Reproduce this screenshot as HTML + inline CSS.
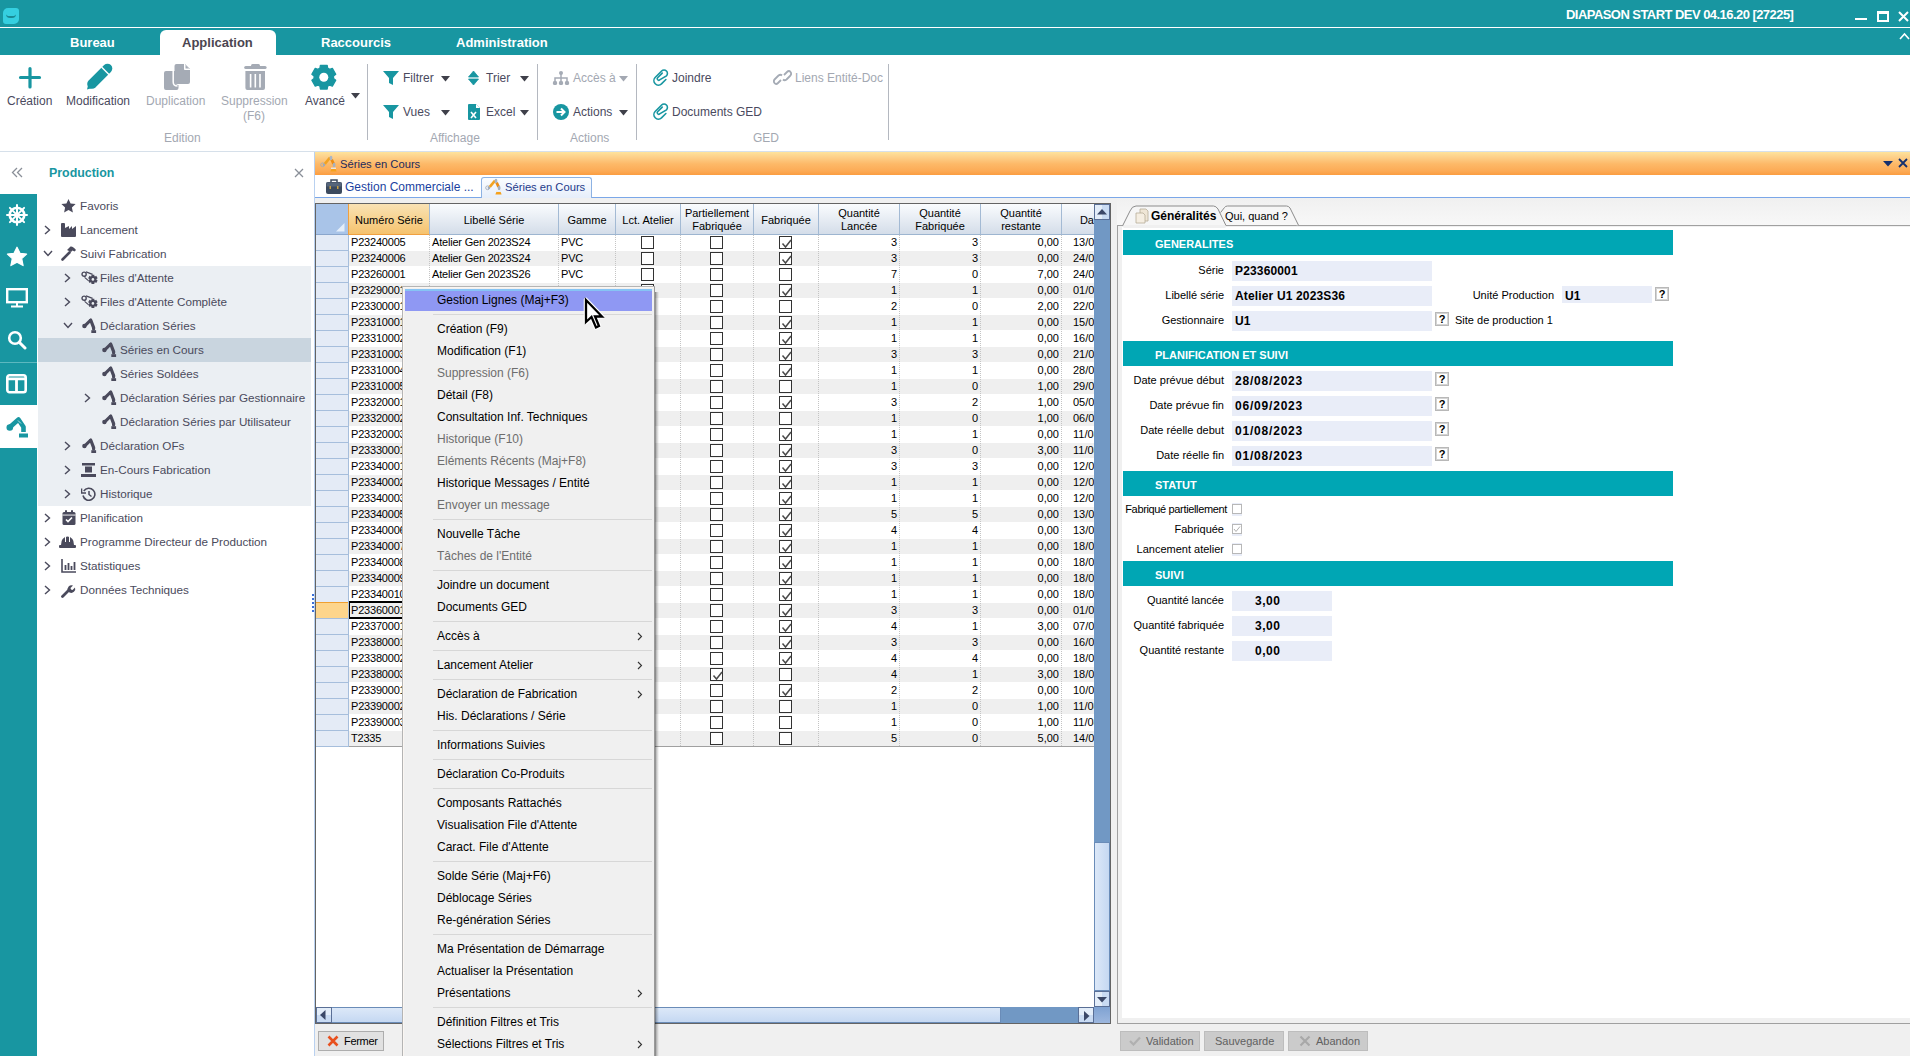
<!DOCTYPE html><html><head><meta charset="utf-8"><style>
*{box-sizing:border-box;margin:0;padding:0}
html,body{width:1910px;height:1056px;overflow:hidden;background:#fff;font-family:"Liberation Sans",sans-serif;}
.ab{position:absolute;white-space:nowrap}
.t{position:absolute;white-space:nowrap;line-height:16px}
</style></head><body>
<div class="ab" style="left:0;top:0;width:1910px;height:27px;background:#1896a1"></div>
<div class="ab" style="left:0;top:27px;width:1910px;height:1px;background:#fff"></div>
<div class="ab" style="left:0;top:28px;width:1910px;height:27px;background:#1896a1"></div>
<div class="ab" style="left:3px;top:8px;width:16px;height:16px;background:#35cfe0;border-radius:5px 3px 5px 3px"></div>
<div class="ab" style="left:6px;top:14px;width:10px;height:4px;border-bottom:2px solid #1a8a95;border-radius:0 0 6px 6px"></div>
<div class="t" style="left:1566px;top:7px;font-size:13px;letter-spacing:-0.55px;font-weight:bold;color:#fff">DIAPASON START DEV 04.16.20 [27225]</div>
<div class="ab" style="left:1855px;top:18px;width:12px;height:2px;background:#fff"></div>
<div class="ab" style="left:1877px;top:11px;width:12px;height:11px;border:2px solid #fff;border-top-width:3px"></div>
<svg class="ab" style="left:1898px;top:11px" width="11" height="11"><path d="M1 1L10 10M10 1L1 10" stroke="#fff" stroke-width="2"/></svg>
<svg class="ab" style="left:1899px;top:32px" width="11" height="8"><path d="M1 7L5.5 2L10 7" stroke="#fff" stroke-width="1.6" fill="none"/></svg>
<div class="ab" style="left:160px;top:30px;width:116px;height:25px;background:#fff;border-radius:6px 6px 0 0"></div>
<div class="t" style="left:70px;top:35px;font-size:13px;font-weight:bold;color:#fff">Bureau</div>
<div class="t" style="left:182px;top:35px;font-size:13px;font-weight:bold;color:#4b4550">Application</div>
<div class="t" style="left:321px;top:35px;font-size:13px;font-weight:bold;color:#fff">Raccourcis</div>
<div class="t" style="left:456px;top:35px;font-size:13px;font-weight:bold;color:#fff">Administration</div>
<div class="ab" style="left:0;top:151px;width:1910px;height:1px;background:#d6e0ea"></div>
<div class="ab" style="left:367px;top:64px;width:1px;height:76px;background:#b4b8c0"></div>
<div class="ab" style="left:537px;top:64px;width:1px;height:76px;background:#b4b8c0"></div>
<div class="ab" style="left:636px;top:64px;width:1px;height:76px;background:#b4b8c0"></div>
<div class="ab" style="left:888px;top:64px;width:1px;height:76px;background:#b4b8c0"></div>
<div class="t" style="left:7px;top:93px;font-size:12px;color:#4a4a5e">Création</div>
<div class="t" style="left:66px;top:93px;font-size:12px;color:#4a4a5e">Modification</div>
<div class="t" style="left:146px;top:93px;font-size:12px;color:#a3a8b2">Duplication</div>
<div class="t" style="left:221px;top:93px;font-size:12px;color:#a3a8b2">Suppression</div>
<div class="t" style="left:243px;top:108px;font-size:12px;color:#a3a8b2">(F6)</div>
<div class="t" style="left:305px;top:93px;font-size:12px;color:#4a4a5e">Avancé</div>
<div class="t" style="left:164px;top:130px;font-size:12px;color:#a3a8b2">Edition</div>
<div class="t" style="left:430px;top:130px;font-size:12px;color:#a3a8b2">Affichage</div>
<div class="t" style="left:570px;top:130px;font-size:12px;color:#a3a8b2">Actions</div>
<div class="t" style="left:753px;top:130px;font-size:12px;color:#a3a8b2">GED</div>
<div class="t" style="left:403px;top:70px;font-size:12px;color:#4a4a5e">Filtrer</div>
<div class="t" style="left:486px;top:70px;font-size:12px;color:#4a4a5e">Trier</div>
<div class="t" style="left:573px;top:70px;font-size:12px;color:#a3a8b2">Accès à</div>
<div class="t" style="left:672px;top:70px;font-size:12px;color:#4a4a5e">Joindre</div>
<div class="t" style="left:795px;top:70px;font-size:12px;color:#a3a8b2">Liens Entité-Doc</div>
<div class="t" style="left:403px;top:104px;font-size:12px;color:#4a4a5e">Vues</div>
<div class="t" style="left:486px;top:104px;font-size:12px;color:#4a4a5e">Excel</div>
<div class="t" style="left:573px;top:104px;font-size:12px;color:#4a4a5e">Actions</div>
<div class="t" style="left:672px;top:104px;font-size:12px;color:#4a4a5e">Documents GED</div>
<svg class="ab" style="left:351px;top:93px" width="9" height="6"><path d="M0 0H9L4.5 5.5Z" fill="#3f404a"/></svg>
<svg class="ab" style="left:441px;top:76px" width="9" height="6"><path d="M0 0H9L4.5 5.5Z" fill="#3f404a"/></svg>
<svg class="ab" style="left:520px;top:76px" width="9" height="6"><path d="M0 0H9L4.5 5.5Z" fill="#3f404a"/></svg>
<svg class="ab" style="left:619px;top:76px" width="9" height="6"><path d="M0 0H9L4.5 5.5Z" fill="#a3a8b2"/></svg>
<svg class="ab" style="left:441px;top:110px" width="9" height="6"><path d="M0 0H9L4.5 5.5Z" fill="#3f404a"/></svg>
<svg class="ab" style="left:520px;top:110px" width="9" height="6"><path d="M0 0H9L4.5 5.5Z" fill="#3f404a"/></svg>
<svg class="ab" style="left:619px;top:110px" width="9" height="6"><path d="M0 0H9L4.5 5.5Z" fill="#3f404a"/></svg>
<svg class="ab" style="left:17px;top:65px" width="26" height="26"><path d="M13 3.5V22M3.5 12.5H22.5" stroke="#1896a1" stroke-width="3.2" stroke-linecap="round"/></svg>
<svg class="ab" style="left:85px;top:62px" width="29" height="29"><path d="M2 27.5L4.3 18.5L10.8 25Z" fill="#1896a1"/><path d="M7 22L22.5 6.5" stroke="#1896a1" stroke-width="9.6" stroke-linecap="round"/><path d="M16.5 5L24.2 12.7" stroke="#fff" stroke-width="1.4"/></svg>
<svg class="ab" style="left:162px;top:62px" width="30" height="30"><path d="M12.5 4Q12.5 2 14.5 2H23L28 7V20Q28 22 26 22H14.5Q12.5 22 12.5 20Z" fill="#a5abb5"/><path d="M22.5 2V7.5H28" fill="#fff" stroke="#fff" stroke-width="1"/><path d="M23.5 3L27 6.5H23.5Z" fill="#a5abb5"/><path d="M2 11Q2 9 4 9H13.5V20Q13.5 23 16.5 23H16.5V26Q16.5 28 14.5 28H4Q2 28 2 26Z" fill="#a5abb5"/><path d="M11.2 8.5V20Q11.2 24 15.5 24" stroke="#fff" stroke-width="1.5" fill="none"/></svg>
<svg class="ab" style="left:244px;top:63px" width="23" height="28"><rect x="0.2" y="3" width="22.4" height="3" rx="1.5" fill="#a5abb5"/><rect x="7" y="1" width="9" height="3" rx="1.5" fill="#a5abb5"/><path d="M1.4 8H21V25Q21 27 19 27H3.4Q1.4 27 1.4 25Z" fill="#a5abb5"/><path d="M6.6 11V24.5M11.3 11V24.5M16 11V24.5" stroke="#fff" stroke-width="1.6"/></svg>
<svg class="ab" style="left:311px;top:64px" width="26" height="27"><path d="M8.98 4.17 L9.40 1.38 L16.20 1.38 L16.62 4.17 L18.71 5.38 L21.34 4.35 L24.74 10.23 L22.53 11.99 L22.53 14.41 L24.74 16.17 L21.34 22.05 L18.71 21.02 L16.62 22.23 L16.20 25.02 L9.40 25.02 L8.98 22.23 L6.89 21.02 L4.26 22.05 L0.86 16.17 L3.07 14.41 L3.07 11.99 L0.86 10.23 L4.26 4.35 L6.89 5.38Z" fill="#1896a1" stroke="#1896a1" stroke-width="1.3" stroke-linejoin="round"/><circle cx="12.8" cy="13.2" r="4.5" fill="#fff"/></svg>
<svg class="ab" style="left:383px;top:71px" width="16" height="15"><path d="M0 0H16L10 7V14L6 12V7Z" fill="#1896a1"/></svg>
<svg class="ab" style="left:383px;top:105px" width="16" height="15"><path d="M0 0H16L10 7V14L6 12V7Z" fill="#1896a1"/></svg>
<svg class="ab" style="left:468px;top:70px" width="11" height="16"><path d="M5.5 1L10.5 7H0.5Z M5.5 15L10.5 9H0.5Z" fill="#1896a1" stroke="#1896a1" stroke-width="0.8" stroke-linejoin="round"/></svg>
<svg class="ab" style="left:468px;top:104px" width="12" height="16"><path d="M0 1Q0 0 1 0H8L12 4V15Q12 16 11 16H1Q0 16 0 15Z" fill="#1896a1"/><path d="M8 0V4H12" fill="#fff"/><path d="M3 8L8 14M8 8L3 14" stroke="#fff" stroke-width="1.6"/></svg>
<svg class="ab" style="left:552px;top:71px" width="18" height="14"><circle cx="9" cy="2" r="2" fill="#a5abb5"/><path d="M9 3V7M3 11V7H15V11M9 7V11" stroke="#a5abb5" stroke-width="1.5" fill="none"/><circle cx="3" cy="12" r="2.2" fill="#a5abb5"/><circle cx="9" cy="12" r="2.2" fill="#a5abb5"/><circle cx="15" cy="12" r="2.2" fill="#a5abb5"/></svg>
<svg class="ab" style="left:553px;top:104px" width="16" height="16"><circle cx="8" cy="8" r="8" fill="#1896a1"/><path d="M3.5 8H11M8 4.5L11.5 8L8 11.5" stroke="#fff" stroke-width="2" fill="none"/></svg>
<svg class="ab" style="left:650px;top:67px" width="21" height="22"><path d="M15.87 12.50 L11.48 16.88 A4.5 4.5 0 0 1 5.12 10.52 L11.62 4.01 A3.4 3.4 0 0 1 16.43 8.82 L9.68 12.82 A1.45 1.45 0 0 1 7.63 10.77 L12.22 6.17" stroke="#1896a1" stroke-width="1.6" fill="none" stroke-linecap="round"/></svg>
<svg class="ab" style="left:650px;top:101px" width="21" height="22"><path d="M15.87 12.50 L11.48 16.88 A4.5 4.5 0 0 1 5.12 10.52 L11.62 4.01 A3.4 3.4 0 0 1 16.43 8.82 L9.68 12.82 A1.45 1.45 0 0 1 7.63 10.77 L12.22 6.17" stroke="#1896a1" stroke-width="1.6" fill="none" stroke-linecap="round"/></svg>
<svg class="ab" style="left:773px;top:70px" width="19" height="15"><path d="M8 10L5 13Q3 15 1.5 13Q0 11 2 9L5.5 5.5Q7.5 4 9 5.5M11 5L14 2Q16 0 17.5 2Q19 4 17 6L13.5 9.5Q11.5 11 10 9.5" stroke="#a5abb5" stroke-width="1.8" fill="none"/></svg>
<div class="ab" style="left:0;top:194px;width:37px;height:862px;background:#1896a1"></div>
<div class="ab" style="left:0;top:405px;width:37px;height:43px;background:#fff"></div>
<div class="ab" style="left:0;top:362px;width:37px;height:1px;background:#5cb8bf"></div>
<svg class="ab" style="left:11px;top:167px" width="12" height="11"><path d="M6 1L1.5 5.5L6 10M11 1L6.5 5.5L11 10" stroke="#8a8f98" stroke-width="1.3" fill="none"/></svg>
<div class="t" style="left:49px;top:165px;font-size:12.4px;font-weight:bold;color:#1896a1">Production</div>
<svg class="ab" style="left:294px;top:168px" width="10" height="10"><path d="M1 1L9 9M9 1L1 9" stroke="#8a8f98" stroke-width="1.3"/></svg>
<svg class="ab" style="left:6px;top:204px" width="22" height="22" viewBox="0 0 22 22"><circle cx="11" cy="11" r="7.3" stroke="#fff" stroke-width="2.6" fill="none"/><circle cx="11" cy="11" r="1.8" fill="#fff"/><path d="M11 1V21M1 11H21M3.9 3.9L18.1 18.1M18.1 3.9L3.9 18.1" stroke="#fff" stroke-width="2" stroke-linecap="round"/></svg>
<svg class="ab" style="left:6px;top:246px" width="22" height="21" viewBox="0 0 22 21"><path d="M11 1.2L14 7.3L20.6 8.1L15.7 12.6L17.1 19.6L11 16.2L4.9 19.6L6.3 12.6L1.4 8.1L8 7.3Z" fill="#fff" stroke="#fff" stroke-width="1.2" stroke-linejoin="round"/></svg>
<svg class="ab" style="left:6px;top:288px" width="22" height="20"><rect x="1.2" y="1.2" width="19.6" height="13" stroke="#fff" stroke-width="2.4" fill="none"/><path d="M11 14.5V18M5 18.5H17" stroke="#fff" stroke-width="2"/></svg>
<svg class="ab" style="left:7px;top:330px" width="20" height="20"><circle cx="8" cy="8" r="5.8" stroke="#fff" stroke-width="2.6" fill="none"/><path d="M12.5 12.5L18 18" stroke="#fff" stroke-width="3" stroke-linecap="round"/></svg>
<svg class="ab" style="left:6px;top:374px" width="21" height="20"><rect x="1.3" y="1.3" width="18.4" height="17" rx="2.2" stroke="#fff" stroke-width="2.6" fill="none"/><path d="M1 4.8H20M10.5 5V18" stroke="#fff" stroke-width="2.8"/></svg>
<svg class="ab" style="left:5px;top:414px" width="24" height="25"><circle cx="4.8" cy="13.5" r="3.3" fill="#1896a1"/><path d="M5 13L13.5 5.5L18.5 13V18" stroke="#1896a1" stroke-width="4.6" fill="none" stroke-linejoin="round"/><rect x="14" y="19.5" width="9" height="4" fill="#1896a1"/><path d="M13 6.5L16 9.5" stroke="#fff" stroke-width="0.7"/></svg>
<div class="ab" style="left:38px;top:266px;width:273px;height:240px;background:#ebeff3"></div>
<div class="ab" style="left:38px;top:338px;width:273px;height:24px;background:#c9d5df"></div>
<svg class="ab" style="left:61px;top:199px" width="15" height="14"><path d="M7.5 0L9.6 4.6L14.6 5.1L10.9 8.5L11.9 13.5L7.5 11L3.1 13.5L4.1 8.5L0.4 5.1L5.4 4.6Z" fill="#4a4a5c"/></svg>
<div class="t" style="left:80px;top:198px;font-size:11.7px;color:#4a4a5c">Favoris</div>
<svg class="ab" style="left:44px;top:225px" width="7" height="10"><path d="M1 1L5.5 5L1 9" stroke="#4a4a5c" stroke-width="1.4" fill="none"/></svg>
<svg class="ab" style="left:61px;top:223px" width="15" height="14"><path d="M0 1Q0 0 1 0H3Q4 0 4 1V5L8 3V6L11 3V6L15 3V13Q15 14 14 14H1Q0 14 0 13Z" fill="#4a4a5c"/></svg>
<div class="t" style="left:80px;top:222px;font-size:11.7px;color:#4a4a5c">Lancement</div>
<svg class="ab" style="left:43px;top:250px" width="10" height="7"><path d="M1 1L5 5.5L9 1" stroke="#4a4a5c" stroke-width="1.4" fill="none"/></svg>
<svg class="ab" style="left:61px;top:246px" width="16" height="15"><path d="M1.5 13.5L8.5 6.5" stroke="#4a4a5c" stroke-width="2.6" stroke-linecap="round"/><path d="M6 4L9.5 0.5Q12 0 15 4L13.5 5.5L11.5 4.5L10 6Z" fill="#4a4a5c"/></svg>
<div class="t" style="left:80px;top:246px;font-size:11.7px;color:#4a4a5c">Suivi Fabrication</div>
<svg class="ab" style="left:64px;top:273px" width="7" height="10"><path d="M1 1L5.5 5L1 9" stroke="#4a4a5c" stroke-width="1.4" fill="none"/></svg>
<svg class="ab" style="left:81px;top:271px" width="17" height="15"><circle cx="3.1" cy="3.2" r="2.1" stroke="#4a4a5c" stroke-width="1.4" fill="none"/><path d="M5 0.9L11.6 3.4M3.6 6.4L7.4 9.6" stroke="#4a4a5c" stroke-width="1.2"/><path d="M10.43 5.11 L10.45 3.72 L13.35 3.72 L13.37 5.11 L14.01 5.49 L15.23 4.81 L16.68 7.31 L15.48 8.03 L15.48 8.77 L16.68 9.49 L15.23 11.99 L14.01 11.31 L13.37 11.69 L13.35 13.08 L10.45 13.08 L10.43 11.69 L9.79 11.31 L8.57 11.99 L7.12 9.49 L8.32 8.77 L8.32 8.03 L7.12 7.31 L8.57 4.81 L9.79 5.49Z" fill="#4a4a5c"/><circle cx="11.9" cy="8.4" r="1.3" fill="#ebeff3"/></svg>
<div class="t" style="left:100px;top:270px;font-size:11.7px;color:#4a4a5c">Files d'Attente</div>
<svg class="ab" style="left:64px;top:297px" width="7" height="10"><path d="M1 1L5.5 5L1 9" stroke="#4a4a5c" stroke-width="1.4" fill="none"/></svg>
<svg class="ab" style="left:81px;top:295px" width="17" height="15"><circle cx="3.1" cy="3.2" r="2.1" stroke="#4a4a5c" stroke-width="1.4" fill="none"/><path d="M5 0.9L11.6 3.4M3.6 6.4L7.4 9.6" stroke="#4a4a5c" stroke-width="1.2"/><path d="M10.43 5.11 L10.45 3.72 L13.35 3.72 L13.37 5.11 L14.01 5.49 L15.23 4.81 L16.68 7.31 L15.48 8.03 L15.48 8.77 L16.68 9.49 L15.23 11.99 L14.01 11.31 L13.37 11.69 L13.35 13.08 L10.45 13.08 L10.43 11.69 L9.79 11.31 L8.57 11.99 L7.12 9.49 L8.32 8.77 L8.32 8.03 L7.12 7.31 L8.57 4.81 L9.79 5.49Z" fill="#4a4a5c"/><circle cx="11.9" cy="8.4" r="1.3" fill="#ebeff3"/></svg>
<div class="t" style="left:100px;top:294px;font-size:11.7px;color:#4a4a5c">Files d'Attente Complète</div>
<svg class="ab" style="left:63px;top:322px" width="10" height="7"><path d="M1 1L5 5.5L9 1" stroke="#4a4a5c" stroke-width="1.4" fill="none"/></svg>
<svg class="ab" style="left:81px;top:318px" width="17" height="16"><circle cx="3.4" cy="8" r="2.2" fill="#4a4a5c"/><path d="M3.8 7.8L9.6 2.2" stroke="#4a4a5c" stroke-width="3" stroke-linecap="round"/><path d="M9.8 2.2L12.6 9.6V11" stroke="#4a4a5c" stroke-width="3.2" stroke-linecap="round"/><rect x="10.3" y="12.2" width="4.8" height="2.8" fill="#4a4a5c"/></svg>
<div class="t" style="left:100px;top:318px;font-size:11.7px;color:#4a4a5c">Déclaration Séries</div>
<svg class="ab" style="left:101px;top:342px" width="17" height="16"><circle cx="3.4" cy="8" r="2.2" fill="#4a4a5c"/><path d="M3.8 7.8L9.6 2.2" stroke="#4a4a5c" stroke-width="3" stroke-linecap="round"/><path d="M9.8 2.2L12.6 9.6V11" stroke="#4a4a5c" stroke-width="3.2" stroke-linecap="round"/><rect x="10.3" y="12.2" width="4.8" height="2.8" fill="#4a4a5c"/></svg>
<div class="t" style="left:120px;top:342px;font-size:11.7px;color:#4a4a5c">Séries en Cours</div>
<svg class="ab" style="left:101px;top:366px" width="17" height="16"><circle cx="3.4" cy="8" r="2.2" fill="#4a4a5c"/><path d="M3.8 7.8L9.6 2.2" stroke="#4a4a5c" stroke-width="3" stroke-linecap="round"/><path d="M9.8 2.2L12.6 9.6V11" stroke="#4a4a5c" stroke-width="3.2" stroke-linecap="round"/><rect x="10.3" y="12.2" width="4.8" height="2.8" fill="#4a4a5c"/></svg>
<div class="t" style="left:120px;top:366px;font-size:11.7px;color:#4a4a5c">Séries Soldées</div>
<svg class="ab" style="left:84px;top:393px" width="7" height="10"><path d="M1 1L5.5 5L1 9" stroke="#4a4a5c" stroke-width="1.4" fill="none"/></svg>
<svg class="ab" style="left:101px;top:390px" width="17" height="16"><circle cx="3.4" cy="8" r="2.2" fill="#4a4a5c"/><path d="M3.8 7.8L9.6 2.2" stroke="#4a4a5c" stroke-width="3" stroke-linecap="round"/><path d="M9.8 2.2L12.6 9.6V11" stroke="#4a4a5c" stroke-width="3.2" stroke-linecap="round"/><rect x="10.3" y="12.2" width="4.8" height="2.8" fill="#4a4a5c"/></svg>
<div class="t" style="left:120px;top:390px;font-size:11.7px;color:#4a4a5c">Déclaration Séries par Gestionnaire</div>
<svg class="ab" style="left:101px;top:414px" width="17" height="16"><circle cx="3.4" cy="8" r="2.2" fill="#4a4a5c"/><path d="M3.8 7.8L9.6 2.2" stroke="#4a4a5c" stroke-width="3" stroke-linecap="round"/><path d="M9.8 2.2L12.6 9.6V11" stroke="#4a4a5c" stroke-width="3.2" stroke-linecap="round"/><rect x="10.3" y="12.2" width="4.8" height="2.8" fill="#4a4a5c"/></svg>
<div class="t" style="left:120px;top:414px;font-size:11.7px;color:#4a4a5c">Déclaration Séries par Utilisateur</div>
<svg class="ab" style="left:64px;top:441px" width="7" height="10"><path d="M1 1L5.5 5L1 9" stroke="#4a4a5c" stroke-width="1.4" fill="none"/></svg>
<svg class="ab" style="left:81px;top:438px" width="17" height="16"><circle cx="3.4" cy="8" r="2.2" fill="#4a4a5c"/><path d="M3.8 7.8L9.6 2.2" stroke="#4a4a5c" stroke-width="3" stroke-linecap="round"/><path d="M9.8 2.2L12.6 9.6V11" stroke="#4a4a5c" stroke-width="3.2" stroke-linecap="round"/><rect x="10.3" y="12.2" width="4.8" height="2.8" fill="#4a4a5c"/></svg>
<div class="t" style="left:100px;top:438px;font-size:11.7px;color:#4a4a5c">Déclaration OFs</div>
<svg class="ab" style="left:64px;top:465px" width="7" height="10"><path d="M1 1L5.5 5L1 9" stroke="#4a4a5c" stroke-width="1.4" fill="none"/></svg>
<svg class="ab" style="left:81px;top:463px" width="15" height="14"><rect x="1" y="0" width="13" height="2.5" fill="#4a4a5c"/><rect x="4" y="3.5" width="7" height="6" fill="#4a4a5c"/><rect x="0" y="11" width="15" height="3" fill="#4a4a5c"/></svg>
<div class="t" style="left:100px;top:462px;font-size:11.7px;color:#4a4a5c">En-Cours Fabrication</div>
<svg class="ab" style="left:64px;top:489px" width="7" height="10"><path d="M1 1L5.5 5L1 9" stroke="#4a4a5c" stroke-width="1.4" fill="none"/></svg>
<svg class="ab" style="left:81px;top:487px" width="15" height="14"><path d="M2.8 4A6 6 0 1 1 2 8.5" stroke="#4a4a5c" stroke-width="1.6" fill="none"/><path d="M0.5 1.5V6H5" stroke="#4a4a5c" stroke-width="1.6" fill="none"/><path d="M8 4V7.5L10.5 9.5" stroke="#4a4a5c" stroke-width="1.5" fill="none"/></svg>
<div class="t" style="left:100px;top:486px;font-size:11.7px;color:#4a4a5c">Historique</div>
<svg class="ab" style="left:44px;top:513px" width="7" height="10"><path d="M1 1L5.5 5L1 9" stroke="#4a4a5c" stroke-width="1.4" fill="none"/></svg>
<svg class="ab" style="left:62px;top:510px" width="14" height="15"><rect x="0.5" y="2" width="13" height="13" rx="1.5" fill="#4a4a5c"/><rect x="3" y="0" width="2" height="3" rx="1" fill="#4a4a5c"/><rect x="9" y="0" width="2" height="3" rx="1" fill="#4a4a5c"/><rect x="0.5" y="4.6" width="13" height="0.9" fill="#fff"/><path d="M4 9.5L6 11.5L10 7.5" stroke="#fff" stroke-width="1.7" fill="none"/></svg>
<div class="t" style="left:80px;top:510px;font-size:11.7px;color:#4a4a5c">Planification</div>
<svg class="ab" style="left:44px;top:537px" width="7" height="10"><path d="M1 1L5.5 5L1 9" stroke="#4a4a5c" stroke-width="1.4" fill="none"/></svg>
<svg class="ab" style="left:59px;top:535px" width="17" height="13"><path d="M2 10Q2 2 8.5 1.5Q15 2 15 10Z" fill="#4a4a5c"/><rect x="0" y="10" width="17" height="3" rx="1" fill="#4a4a5c"/><path d="M6.5 2V7M10.5 2V7" stroke="#fff" stroke-width="1"/></svg>
<div class="t" style="left:80px;top:534px;font-size:11.7px;color:#4a4a5c">Programme Directeur de Production</div>
<svg class="ab" style="left:44px;top:561px" width="7" height="10"><path d="M1 1L5.5 5L1 9" stroke="#4a4a5c" stroke-width="1.4" fill="none"/></svg>
<svg class="ab" style="left:61px;top:559px" width="15" height="14"><path d="M1 0V13H15" stroke="#4a4a5c" stroke-width="1.6" fill="none"/><path d="M4.5 11V6M7.5 11V4M10.5 11V7M13.5 11V3" stroke="#4a4a5c" stroke-width="1.8"/></svg>
<div class="t" style="left:80px;top:558px;font-size:11.7px;color:#4a4a5c">Statistiques</div>
<svg class="ab" style="left:44px;top:585px" width="7" height="10"><path d="M1 1L5.5 5L1 9" stroke="#4a4a5c" stroke-width="1.4" fill="none"/></svg>
<svg class="ab" style="left:61px;top:583px" width="15" height="15"><path d="M1.5 13.5L8 7" stroke="#4a4a5c" stroke-width="2.8" stroke-linecap="round"/><path d="M7 8A4 4 0 0 1 12 2.5L9.5 5L10 6.5L11.5 7L14 4.5A4 4 0 0 1 8.5 9.5Z" fill="#4a4a5c"/></svg>
<div class="t" style="left:80px;top:582px;font-size:11.7px;color:#4a4a5c">Données Techniques</div>
<div class="ab" style="left:314px;top:152px;width:1px;height:904px;background:#b9d1f0"></div>
<div class="ab" style="left:315px;top:152px;width:1595px;height:23px;background:linear-gradient(#fee39c 0%,#fdd08a 22%,#fdb968 52%,#fcab56 82%,#fb9d40 100%)"></div>
<div class="t" style="left:340px;top:156px;font-size:11.2px;color:#1e2a5c">Séries en Cours</div>
<svg class="ab" style="left:1883px;top:161px" width="10" height="6"><path d="M0 0H10L5 5.5Z" fill="#15306e"/></svg>
<svg class="ab" style="left:1898px;top:158px" width="10" height="10"><path d="M1 1L9 9M9 1L1 9" stroke="#15306e" stroke-width="1.8"/></svg>
<svg class="ab" style="left:318px;top:152px" width="24" height="24" viewBox="0 0 24 24"><circle cx="4.6" cy="12.8" r="1.9" stroke="#a3acb8" stroke-width="0.9" fill="none"/><circle cx="6" cy="12.8" r="1.3" fill="#9eaaba"/><path d="M6.8 11.8L12 5.6" stroke="#f2a322" stroke-width="2.6"/><path d="M13.6 7.5L15.6 11.8" stroke="#ec8d14" stroke-width="2.8"/><ellipse cx="13" cy="6" rx="1.4" ry="2.2" fill="#aab5c4"/><ellipse cx="16.1" cy="13" rx="1.4" ry="2.2" fill="#a4b0c0"/><rect x="13" y="15.6" width="5" height="1.3" fill="#e6ecf2"/><path d="M12.4 19.6L13.3 16.9H17.7L18.6 19.6Z" fill="#f5a11c"/></svg>
<div class="ab" style="left:315px;top:197px;width:1595px;height:1px;background:#7ba7e8"></div>
<svg class="ab" style="left:326px;top:179px" width="16" height="15"><rect x="0" y="3" width="16" height="12" rx="2" fill="#3c4a5e"/><path d="M5 3V1H11V3" stroke="#3c4a5e" stroke-width="1.5" fill="none"/><rect x="0.5" y="3.5" width="15" height="4" fill="#56657a"/><rect x="3.5" y="7" width="1.5" height="3" fill="#c9a040"/><rect x="11" y="7" width="1.5" height="3" fill="#c9a040"/></svg>
<div class="t" style="left:345px;top:179px;font-size:12px;color:#1a3fa0">Gestion Commerciale ...</div>
<div class="ab" style="left:481px;top:177px;width:111px;height:21px;border:1px solid #8db2e3;border-bottom:none;border-radius:3px 3px 0 0;background:linear-gradient(#fbfdff,#e6eefa)"></div>
<svg class="ab" style="left:483px;top:175px" width="24" height="24" viewBox="0 0 24 24"><circle cx="4.6" cy="12.8" r="1.9" stroke="#a3acb8" stroke-width="0.9" fill="none"/><circle cx="6" cy="12.8" r="1.3" fill="#9eaaba"/><path d="M6.8 11.8L12 5.6" stroke="#f2a322" stroke-width="2.6"/><path d="M13.6 7.5L15.6 11.8" stroke="#ec8d14" stroke-width="2.8"/><ellipse cx="13" cy="6" rx="1.4" ry="2.2" fill="#aab5c4"/><ellipse cx="16.1" cy="13" rx="1.4" ry="2.2" fill="#a4b0c0"/><rect x="13" y="15.6" width="5" height="1.3" fill="#e6ecf2"/><path d="M12.4 19.6L13.3 16.9H17.7L18.6 19.6Z" fill="#f5a11c"/></svg>
<div class="t" style="left:505px;top:179px;font-size:11.2px;color:#1e3a8a">Séries en Cours</div>
<div class="ab" style="left:315px;top:198px;width:1595px;height:858px;background:#f0f0f0"></div>
<div class="ab" style="left:315px;top:203px;width:796px;height:821px;border:1px solid #646464;background:#fff"></div>
<div class="ab" style="left:316px;top:204px;width:33px;height:31px;background:#a9c4e8;border-right:1px solid #8aa6cc;border-bottom:1px solid #8aa6cc"></div>
<svg class="ab" style="left:336px;top:223px" width="9" height="9"><path d="M8.5 0V8.5H0Z" fill="#e4eefa"/></svg>
<div class="ab" style="left:0;top:0;width:1094px;height:240px;overflow:hidden">
<div class="ab" style="left:348px;top:204px;width:1px;height:31px;background:#f0a040"></div>
<div class="ab" style="left:349px;top:204px;width:81px;height:31px;background:linear-gradient(#f9e2b4,#f7d08a 60%,#f5c26e);border-right:1px solid #a3bad4;border-bottom:1px solid #f0a040;font-size:11px;line-height:13px;color:#000;text-align:center;padding-top:10px;overflow:hidden">Numéro Série</div>
<div class="ab" style="left:430px;top:204px;width:129px;height:31px;background:linear-gradient(#fafcfe,#d4dde9);border-right:1px solid #a3bad4;border-bottom:1px solid #9db5d0;font-size:11px;line-height:13px;color:#000;text-align:center;padding-top:10px;overflow:hidden">Libellé Série</div>
<div class="ab" style="left:559px;top:204px;width:57px;height:31px;background:linear-gradient(#fafcfe,#d4dde9);border-right:1px solid #a3bad4;border-bottom:1px solid #9db5d0;font-size:11px;line-height:13px;color:#000;text-align:center;padding-top:10px;overflow:hidden">Gamme</div>
<div class="ab" style="left:616px;top:204px;width:65px;height:31px;background:linear-gradient(#fafcfe,#d4dde9);border-right:1px solid #a3bad4;border-bottom:1px solid #9db5d0;font-size:11px;line-height:13px;color:#000;text-align:center;padding-top:10px;overflow:hidden">Lct. Atelier</div>
<div class="ab" style="left:681px;top:204px;width:73px;height:31px;background:linear-gradient(#fafcfe,#d4dde9);border-right:1px solid #a3bad4;border-bottom:1px solid #9db5d0;font-size:11px;line-height:13px;color:#000;text-align:center;padding-top:3px;overflow:hidden">Partiellement<br>Fabriquée</div>
<div class="ab" style="left:754px;top:204px;width:65px;height:31px;background:linear-gradient(#fafcfe,#d4dde9);border-right:1px solid #a3bad4;border-bottom:1px solid #9db5d0;font-size:11px;line-height:13px;color:#000;text-align:center;padding-top:10px;overflow:hidden">Fabriquée</div>
<div class="ab" style="left:819px;top:204px;width:81px;height:31px;background:linear-gradient(#fafcfe,#d4dde9);border-right:1px solid #a3bad4;border-bottom:1px solid #9db5d0;font-size:11px;line-height:13px;color:#000;text-align:center;padding-top:3px;overflow:hidden">Quantité<br>Lancée</div>
<div class="ab" style="left:900px;top:204px;width:81px;height:31px;background:linear-gradient(#fafcfe,#d4dde9);border-right:1px solid #a3bad4;border-bottom:1px solid #9db5d0;font-size:11px;line-height:13px;color:#000;text-align:center;padding-top:3px;overflow:hidden">Quantité<br>Fabriquée</div>
<div class="ab" style="left:981px;top:204px;width:81px;height:31px;background:linear-gradient(#fafcfe,#d4dde9);border-right:1px solid #a3bad4;border-bottom:1px solid #9db5d0;font-size:11px;line-height:13px;color:#000;text-align:center;padding-top:3px;overflow:hidden">Quantité<br>restante</div>
<div class="ab" style="left:1062px;top:204px;width:60px;height:31px;background:linear-gradient(#fafcfe,#d4dde9);border-right:1px solid #a3bad4;border-bottom:1px solid #9db5d0;font-size:11px;line-height:13px;color:#000;text-align:center;padding-top:10px;overflow:hidden">Date</div>
</div>
<div class="ab" style="left:316px;top:235px;width:778px;height:512px;overflow:hidden">
<div class="ab" style="left:32px;top:0px;width:746px;height:15px;background:#fff"></div>
<div class="ab" style="left:32px;top:16px;width:746px;height:15px;background:#efefef"></div>
<div class="ab" style="left:32px;top:32px;width:746px;height:15px;background:#fff"></div>
<div class="ab" style="left:32px;top:48px;width:746px;height:15px;background:#efefef"></div>
<div class="ab" style="left:32px;top:64px;width:746px;height:15px;background:#fff"></div>
<div class="ab" style="left:32px;top:80px;width:746px;height:15px;background:#efefef"></div>
<div class="ab" style="left:32px;top:96px;width:746px;height:15px;background:#fff"></div>
<div class="ab" style="left:32px;top:112px;width:746px;height:15px;background:#efefef"></div>
<div class="ab" style="left:32px;top:128px;width:746px;height:15px;background:#fff"></div>
<div class="ab" style="left:32px;top:144px;width:746px;height:15px;background:#efefef"></div>
<div class="ab" style="left:32px;top:160px;width:746px;height:15px;background:#fff"></div>
<div class="ab" style="left:32px;top:176px;width:746px;height:15px;background:#efefef"></div>
<div class="ab" style="left:32px;top:192px;width:746px;height:15px;background:#fff"></div>
<div class="ab" style="left:32px;top:208px;width:746px;height:15px;background:#efefef"></div>
<div class="ab" style="left:32px;top:224px;width:746px;height:15px;background:#fff"></div>
<div class="ab" style="left:32px;top:240px;width:746px;height:15px;background:#efefef"></div>
<div class="ab" style="left:32px;top:256px;width:746px;height:15px;background:#fff"></div>
<div class="ab" style="left:32px;top:272px;width:746px;height:15px;background:#efefef"></div>
<div class="ab" style="left:32px;top:288px;width:746px;height:15px;background:#fff"></div>
<div class="ab" style="left:32px;top:304px;width:746px;height:15px;background:#efefef"></div>
<div class="ab" style="left:32px;top:320px;width:746px;height:15px;background:#fff"></div>
<div class="ab" style="left:32px;top:336px;width:746px;height:15px;background:#efefef"></div>
<div class="ab" style="left:32px;top:352px;width:746px;height:15px;background:#fff"></div>
<div class="ab" style="left:32px;top:368px;width:746px;height:15px;background:#efefef"></div>
<div class="ab" style="left:32px;top:384px;width:746px;height:15px;background:#fff"></div>
<div class="ab" style="left:32px;top:400px;width:746px;height:15px;background:#efefef"></div>
<div class="ab" style="left:32px;top:416px;width:746px;height:15px;background:#fff"></div>
<div class="ab" style="left:32px;top:432px;width:746px;height:15px;background:#efefef"></div>
<div class="ab" style="left:32px;top:448px;width:746px;height:15px;background:#fff"></div>
<div class="ab" style="left:32px;top:464px;width:746px;height:15px;background:#efefef"></div>
<div class="ab" style="left:32px;top:480px;width:746px;height:15px;background:#fff"></div>
<div class="ab" style="left:32px;top:496px;width:746px;height:15px;background:#efefef"></div>
</div>
<div class="ab" style="left:316px;top:235px;width:33px;height:16px;background:#e4ebf6;border-right:1px solid #a6bedc;border-bottom:1px solid #a6bedc"></div>
<div class="t" style="left:351px;top:234px;font-size:11px;letter-spacing:-0.2px;color:#000">P23240005</div>
<div class="t" style="left:432px;top:234px;font-size:11px;letter-spacing:-0.2px;color:#000">Atelier Gen 2023S24</div>
<div class="t" style="left:561px;top:234px;font-size:11px;letter-spacing:-0.2px;color:#000">PVC</div>
<div class="ab" style="left:641px;top:236px;width:13px;height:13px;border:1px solid #333;background:#fff"></div>
<div class="ab" style="left:710px;top:236px;width:13px;height:13px;border:1px solid #333;background:#fff"></div>
<div class="ab" style="left:779px;top:236px;width:13px;height:13px;border:1px solid #333;background:#fff"><svg style="position:absolute;left:1px;top:1px" width="11" height="11"><path d="M1.5 5.5L4.5 9L10 2" stroke="#4a4a4a" stroke-width="1.5" fill="none"/></svg></div>
<div class="t" style="left:837px;width:60px;text-align:right;top:234px;font-size:11px;color:#000">3</div>
<div class="t" style="left:918px;width:60px;text-align:right;top:234px;font-size:11px;color:#000">3</div>
<div class="t" style="left:999px;width:60px;text-align:right;top:234px;font-size:11px;color:#000">0,00</div>
<div class="ab" style="left:1061px;top:234px;width:33px;height:16px;overflow:hidden"><div class="t" style="left:12px;top:0;font-size:11px;color:#000">13/08/2023</div></div>
<div class="ab" style="left:316px;top:251px;width:33px;height:16px;background:#e4ebf6;border-right:1px solid #a6bedc;border-bottom:1px solid #a6bedc"></div>
<div class="t" style="left:351px;top:250px;font-size:11px;letter-spacing:-0.2px;color:#000">P23240006</div>
<div class="t" style="left:432px;top:250px;font-size:11px;letter-spacing:-0.2px;color:#000">Atelier Gen 2023S24</div>
<div class="t" style="left:561px;top:250px;font-size:11px;letter-spacing:-0.2px;color:#000">PVC</div>
<div class="ab" style="left:641px;top:252px;width:13px;height:13px;border:1px solid #333;background:#fff"></div>
<div class="ab" style="left:710px;top:252px;width:13px;height:13px;border:1px solid #333;background:#fff"></div>
<div class="ab" style="left:779px;top:252px;width:13px;height:13px;border:1px solid #333;background:#fff"><svg style="position:absolute;left:1px;top:1px" width="11" height="11"><path d="M1.5 5.5L4.5 9L10 2" stroke="#4a4a4a" stroke-width="1.5" fill="none"/></svg></div>
<div class="t" style="left:837px;width:60px;text-align:right;top:250px;font-size:11px;color:#000">3</div>
<div class="t" style="left:918px;width:60px;text-align:right;top:250px;font-size:11px;color:#000">3</div>
<div class="t" style="left:999px;width:60px;text-align:right;top:250px;font-size:11px;color:#000">0,00</div>
<div class="ab" style="left:1061px;top:250px;width:33px;height:16px;overflow:hidden"><div class="t" style="left:12px;top:0;font-size:11px;color:#000">24/08/2023</div></div>
<div class="ab" style="left:316px;top:267px;width:33px;height:16px;background:#e4ebf6;border-right:1px solid #a6bedc;border-bottom:1px solid #a6bedc"></div>
<div class="t" style="left:351px;top:266px;font-size:11px;letter-spacing:-0.2px;color:#000">P23260001</div>
<div class="t" style="left:432px;top:266px;font-size:11px;letter-spacing:-0.2px;color:#000">Atelier Gen 2023S26</div>
<div class="t" style="left:561px;top:266px;font-size:11px;letter-spacing:-0.2px;color:#000">PVC</div>
<div class="ab" style="left:641px;top:268px;width:13px;height:13px;border:1px solid #333;background:#fff"></div>
<div class="ab" style="left:710px;top:268px;width:13px;height:13px;border:1px solid #333;background:#fff"></div>
<div class="ab" style="left:779px;top:268px;width:13px;height:13px;border:1px solid #333;background:#fff"></div>
<div class="t" style="left:837px;width:60px;text-align:right;top:266px;font-size:11px;color:#000">7</div>
<div class="t" style="left:918px;width:60px;text-align:right;top:266px;font-size:11px;color:#000">0</div>
<div class="t" style="left:999px;width:60px;text-align:right;top:266px;font-size:11px;color:#000">7,00</div>
<div class="ab" style="left:1061px;top:266px;width:33px;height:16px;overflow:hidden"><div class="t" style="left:12px;top:0;font-size:11px;color:#000">24/08/2023</div></div>
<div class="ab" style="left:316px;top:283px;width:33px;height:16px;background:#e4ebf6;border-right:1px solid #a6bedc;border-bottom:1px solid #a6bedc"></div>
<div class="t" style="left:351px;top:282px;font-size:11px;letter-spacing:-0.2px;color:#000">P23290001</div>
<div class="t" style="left:432px;top:282px;font-size:11px;letter-spacing:-0.2px;color:#000">Atelier Gen 2023S29</div>
<div class="t" style="left:561px;top:282px;font-size:11px;letter-spacing:-0.2px;color:#000">PVC</div>
<div class="ab" style="left:641px;top:284px;width:13px;height:13px;border:1px solid #333;background:#fff"></div>
<div class="ab" style="left:710px;top:284px;width:13px;height:13px;border:1px solid #333;background:#fff"></div>
<div class="ab" style="left:779px;top:284px;width:13px;height:13px;border:1px solid #333;background:#fff"><svg style="position:absolute;left:1px;top:1px" width="11" height="11"><path d="M1.5 5.5L4.5 9L10 2" stroke="#4a4a4a" stroke-width="1.5" fill="none"/></svg></div>
<div class="t" style="left:837px;width:60px;text-align:right;top:282px;font-size:11px;color:#000">1</div>
<div class="t" style="left:918px;width:60px;text-align:right;top:282px;font-size:11px;color:#000">1</div>
<div class="t" style="left:999px;width:60px;text-align:right;top:282px;font-size:11px;color:#000">0,00</div>
<div class="ab" style="left:1061px;top:282px;width:33px;height:16px;overflow:hidden"><div class="t" style="left:12px;top:0;font-size:11px;color:#000">01/08/2023</div></div>
<div class="ab" style="left:316px;top:299px;width:33px;height:16px;background:#e4ebf6;border-right:1px solid #a6bedc;border-bottom:1px solid #a6bedc"></div>
<div class="t" style="left:351px;top:298px;font-size:11px;letter-spacing:-0.2px;color:#000">P23300001</div>
<div class="t" style="left:432px;top:298px;font-size:11px;letter-spacing:-0.2px;color:#000">Atelier Gen 2023S30</div>
<div class="t" style="left:561px;top:298px;font-size:11px;letter-spacing:-0.2px;color:#000">PVC</div>
<div class="ab" style="left:641px;top:300px;width:13px;height:13px;border:1px solid #333;background:#fff"></div>
<div class="ab" style="left:710px;top:300px;width:13px;height:13px;border:1px solid #333;background:#fff"></div>
<div class="ab" style="left:779px;top:300px;width:13px;height:13px;border:1px solid #333;background:#fff"></div>
<div class="t" style="left:837px;width:60px;text-align:right;top:298px;font-size:11px;color:#000">2</div>
<div class="t" style="left:918px;width:60px;text-align:right;top:298px;font-size:11px;color:#000">0</div>
<div class="t" style="left:999px;width:60px;text-align:right;top:298px;font-size:11px;color:#000">2,00</div>
<div class="ab" style="left:1061px;top:298px;width:33px;height:16px;overflow:hidden"><div class="t" style="left:12px;top:0;font-size:11px;color:#000">22/08/2023</div></div>
<div class="ab" style="left:316px;top:315px;width:33px;height:16px;background:#e4ebf6;border-right:1px solid #a6bedc;border-bottom:1px solid #a6bedc"></div>
<div class="t" style="left:351px;top:314px;font-size:11px;letter-spacing:-0.2px;color:#000">P23310001</div>
<div class="t" style="left:432px;top:314px;font-size:11px;letter-spacing:-0.2px;color:#000">Atelier Gen 2023S31</div>
<div class="t" style="left:561px;top:314px;font-size:11px;letter-spacing:-0.2px;color:#000">PVC</div>
<div class="ab" style="left:641px;top:316px;width:13px;height:13px;border:1px solid #333;background:#fff"></div>
<div class="ab" style="left:710px;top:316px;width:13px;height:13px;border:1px solid #333;background:#fff"></div>
<div class="ab" style="left:779px;top:316px;width:13px;height:13px;border:1px solid #333;background:#fff"><svg style="position:absolute;left:1px;top:1px" width="11" height="11"><path d="M1.5 5.5L4.5 9L10 2" stroke="#4a4a4a" stroke-width="1.5" fill="none"/></svg></div>
<div class="t" style="left:837px;width:60px;text-align:right;top:314px;font-size:11px;color:#000">1</div>
<div class="t" style="left:918px;width:60px;text-align:right;top:314px;font-size:11px;color:#000">1</div>
<div class="t" style="left:999px;width:60px;text-align:right;top:314px;font-size:11px;color:#000">0,00</div>
<div class="ab" style="left:1061px;top:314px;width:33px;height:16px;overflow:hidden"><div class="t" style="left:12px;top:0;font-size:11px;color:#000">15/08/2023</div></div>
<div class="ab" style="left:316px;top:331px;width:33px;height:16px;background:#e4ebf6;border-right:1px solid #a6bedc;border-bottom:1px solid #a6bedc"></div>
<div class="t" style="left:351px;top:330px;font-size:11px;letter-spacing:-0.2px;color:#000">P23310002</div>
<div class="t" style="left:432px;top:330px;font-size:11px;letter-spacing:-0.2px;color:#000">Atelier Gen 2023S31</div>
<div class="t" style="left:561px;top:330px;font-size:11px;letter-spacing:-0.2px;color:#000">PVC</div>
<div class="ab" style="left:641px;top:332px;width:13px;height:13px;border:1px solid #333;background:#fff"></div>
<div class="ab" style="left:710px;top:332px;width:13px;height:13px;border:1px solid #333;background:#fff"></div>
<div class="ab" style="left:779px;top:332px;width:13px;height:13px;border:1px solid #333;background:#fff"><svg style="position:absolute;left:1px;top:1px" width="11" height="11"><path d="M1.5 5.5L4.5 9L10 2" stroke="#4a4a4a" stroke-width="1.5" fill="none"/></svg></div>
<div class="t" style="left:837px;width:60px;text-align:right;top:330px;font-size:11px;color:#000">1</div>
<div class="t" style="left:918px;width:60px;text-align:right;top:330px;font-size:11px;color:#000">1</div>
<div class="t" style="left:999px;width:60px;text-align:right;top:330px;font-size:11px;color:#000">0,00</div>
<div class="ab" style="left:1061px;top:330px;width:33px;height:16px;overflow:hidden"><div class="t" style="left:12px;top:0;font-size:11px;color:#000">16/08/2023</div></div>
<div class="ab" style="left:316px;top:347px;width:33px;height:16px;background:#e4ebf6;border-right:1px solid #a6bedc;border-bottom:1px solid #a6bedc"></div>
<div class="t" style="left:351px;top:346px;font-size:11px;letter-spacing:-0.2px;color:#000">P23310003</div>
<div class="t" style="left:432px;top:346px;font-size:11px;letter-spacing:-0.2px;color:#000">Atelier Gen 2023S31</div>
<div class="t" style="left:561px;top:346px;font-size:11px;letter-spacing:-0.2px;color:#000">PVC</div>
<div class="ab" style="left:641px;top:348px;width:13px;height:13px;border:1px solid #333;background:#fff"></div>
<div class="ab" style="left:710px;top:348px;width:13px;height:13px;border:1px solid #333;background:#fff"></div>
<div class="ab" style="left:779px;top:348px;width:13px;height:13px;border:1px solid #333;background:#fff"><svg style="position:absolute;left:1px;top:1px" width="11" height="11"><path d="M1.5 5.5L4.5 9L10 2" stroke="#4a4a4a" stroke-width="1.5" fill="none"/></svg></div>
<div class="t" style="left:837px;width:60px;text-align:right;top:346px;font-size:11px;color:#000">3</div>
<div class="t" style="left:918px;width:60px;text-align:right;top:346px;font-size:11px;color:#000">3</div>
<div class="t" style="left:999px;width:60px;text-align:right;top:346px;font-size:11px;color:#000">0,00</div>
<div class="ab" style="left:1061px;top:346px;width:33px;height:16px;overflow:hidden"><div class="t" style="left:12px;top:0;font-size:11px;color:#000">21/08/2023</div></div>
<div class="ab" style="left:316px;top:363px;width:33px;height:16px;background:#e4ebf6;border-right:1px solid #a6bedc;border-bottom:1px solid #a6bedc"></div>
<div class="t" style="left:351px;top:362px;font-size:11px;letter-spacing:-0.2px;color:#000">P23310004</div>
<div class="t" style="left:432px;top:362px;font-size:11px;letter-spacing:-0.2px;color:#000">Atelier Gen 2023S31</div>
<div class="t" style="left:561px;top:362px;font-size:11px;letter-spacing:-0.2px;color:#000">PVC</div>
<div class="ab" style="left:641px;top:364px;width:13px;height:13px;border:1px solid #333;background:#fff"></div>
<div class="ab" style="left:710px;top:364px;width:13px;height:13px;border:1px solid #333;background:#fff"></div>
<div class="ab" style="left:779px;top:364px;width:13px;height:13px;border:1px solid #333;background:#fff"><svg style="position:absolute;left:1px;top:1px" width="11" height="11"><path d="M1.5 5.5L4.5 9L10 2" stroke="#4a4a4a" stroke-width="1.5" fill="none"/></svg></div>
<div class="t" style="left:837px;width:60px;text-align:right;top:362px;font-size:11px;color:#000">1</div>
<div class="t" style="left:918px;width:60px;text-align:right;top:362px;font-size:11px;color:#000">1</div>
<div class="t" style="left:999px;width:60px;text-align:right;top:362px;font-size:11px;color:#000">0,00</div>
<div class="ab" style="left:1061px;top:362px;width:33px;height:16px;overflow:hidden"><div class="t" style="left:12px;top:0;font-size:11px;color:#000">28/08/2023</div></div>
<div class="ab" style="left:316px;top:379px;width:33px;height:16px;background:#e4ebf6;border-right:1px solid #a6bedc;border-bottom:1px solid #a6bedc"></div>
<div class="t" style="left:351px;top:378px;font-size:11px;letter-spacing:-0.2px;color:#000">P23310005</div>
<div class="t" style="left:432px;top:378px;font-size:11px;letter-spacing:-0.2px;color:#000">Atelier Gen 2023S31</div>
<div class="t" style="left:561px;top:378px;font-size:11px;letter-spacing:-0.2px;color:#000">PVC</div>
<div class="ab" style="left:641px;top:380px;width:13px;height:13px;border:1px solid #333;background:#fff"></div>
<div class="ab" style="left:710px;top:380px;width:13px;height:13px;border:1px solid #333;background:#fff"></div>
<div class="ab" style="left:779px;top:380px;width:13px;height:13px;border:1px solid #333;background:#fff"></div>
<div class="t" style="left:837px;width:60px;text-align:right;top:378px;font-size:11px;color:#000">1</div>
<div class="t" style="left:918px;width:60px;text-align:right;top:378px;font-size:11px;color:#000">0</div>
<div class="t" style="left:999px;width:60px;text-align:right;top:378px;font-size:11px;color:#000">1,00</div>
<div class="ab" style="left:1061px;top:378px;width:33px;height:16px;overflow:hidden"><div class="t" style="left:12px;top:0;font-size:11px;color:#000">29/08/2023</div></div>
<div class="ab" style="left:316px;top:395px;width:33px;height:16px;background:#e4ebf6;border-right:1px solid #a6bedc;border-bottom:1px solid #a6bedc"></div>
<div class="t" style="left:351px;top:394px;font-size:11px;letter-spacing:-0.2px;color:#000">P23320001</div>
<div class="t" style="left:432px;top:394px;font-size:11px;letter-spacing:-0.2px;color:#000">Atelier Gen 2023S32</div>
<div class="t" style="left:561px;top:394px;font-size:11px;letter-spacing:-0.2px;color:#000">PVC</div>
<div class="ab" style="left:641px;top:396px;width:13px;height:13px;border:1px solid #333;background:#fff"></div>
<div class="ab" style="left:710px;top:396px;width:13px;height:13px;border:1px solid #333;background:#fff"></div>
<div class="ab" style="left:779px;top:396px;width:13px;height:13px;border:1px solid #333;background:#fff"><svg style="position:absolute;left:1px;top:1px" width="11" height="11"><path d="M1.5 5.5L4.5 9L10 2" stroke="#4a4a4a" stroke-width="1.5" fill="none"/></svg></div>
<div class="t" style="left:837px;width:60px;text-align:right;top:394px;font-size:11px;color:#000">3</div>
<div class="t" style="left:918px;width:60px;text-align:right;top:394px;font-size:11px;color:#000">2</div>
<div class="t" style="left:999px;width:60px;text-align:right;top:394px;font-size:11px;color:#000">1,00</div>
<div class="ab" style="left:1061px;top:394px;width:33px;height:16px;overflow:hidden"><div class="t" style="left:12px;top:0;font-size:11px;color:#000">05/08/2023</div></div>
<div class="ab" style="left:316px;top:411px;width:33px;height:16px;background:#e4ebf6;border-right:1px solid #a6bedc;border-bottom:1px solid #a6bedc"></div>
<div class="t" style="left:351px;top:410px;font-size:11px;letter-spacing:-0.2px;color:#000">P23320002</div>
<div class="t" style="left:432px;top:410px;font-size:11px;letter-spacing:-0.2px;color:#000">Atelier Gen 2023S32</div>
<div class="t" style="left:561px;top:410px;font-size:11px;letter-spacing:-0.2px;color:#000">PVC</div>
<div class="ab" style="left:641px;top:412px;width:13px;height:13px;border:1px solid #333;background:#fff"></div>
<div class="ab" style="left:710px;top:412px;width:13px;height:13px;border:1px solid #333;background:#fff"></div>
<div class="ab" style="left:779px;top:412px;width:13px;height:13px;border:1px solid #333;background:#fff"></div>
<div class="t" style="left:837px;width:60px;text-align:right;top:410px;font-size:11px;color:#000">1</div>
<div class="t" style="left:918px;width:60px;text-align:right;top:410px;font-size:11px;color:#000">0</div>
<div class="t" style="left:999px;width:60px;text-align:right;top:410px;font-size:11px;color:#000">1,00</div>
<div class="ab" style="left:1061px;top:410px;width:33px;height:16px;overflow:hidden"><div class="t" style="left:12px;top:0;font-size:11px;color:#000">06/08/2023</div></div>
<div class="ab" style="left:316px;top:427px;width:33px;height:16px;background:#e4ebf6;border-right:1px solid #a6bedc;border-bottom:1px solid #a6bedc"></div>
<div class="t" style="left:351px;top:426px;font-size:11px;letter-spacing:-0.2px;color:#000">P23320003</div>
<div class="t" style="left:432px;top:426px;font-size:11px;letter-spacing:-0.2px;color:#000">Atelier Gen 2023S32</div>
<div class="t" style="left:561px;top:426px;font-size:11px;letter-spacing:-0.2px;color:#000">PVC</div>
<div class="ab" style="left:641px;top:428px;width:13px;height:13px;border:1px solid #333;background:#fff"></div>
<div class="ab" style="left:710px;top:428px;width:13px;height:13px;border:1px solid #333;background:#fff"></div>
<div class="ab" style="left:779px;top:428px;width:13px;height:13px;border:1px solid #333;background:#fff"><svg style="position:absolute;left:1px;top:1px" width="11" height="11"><path d="M1.5 5.5L4.5 9L10 2" stroke="#4a4a4a" stroke-width="1.5" fill="none"/></svg></div>
<div class="t" style="left:837px;width:60px;text-align:right;top:426px;font-size:11px;color:#000">1</div>
<div class="t" style="left:918px;width:60px;text-align:right;top:426px;font-size:11px;color:#000">1</div>
<div class="t" style="left:999px;width:60px;text-align:right;top:426px;font-size:11px;color:#000">0,00</div>
<div class="ab" style="left:1061px;top:426px;width:33px;height:16px;overflow:hidden"><div class="t" style="left:12px;top:0;font-size:11px;color:#000">11/08/2023</div></div>
<div class="ab" style="left:316px;top:443px;width:33px;height:16px;background:#e4ebf6;border-right:1px solid #a6bedc;border-bottom:1px solid #a6bedc"></div>
<div class="t" style="left:351px;top:442px;font-size:11px;letter-spacing:-0.2px;color:#000">P23330001</div>
<div class="t" style="left:432px;top:442px;font-size:11px;letter-spacing:-0.2px;color:#000">Atelier Gen 2023S33</div>
<div class="t" style="left:561px;top:442px;font-size:11px;letter-spacing:-0.2px;color:#000">PVC</div>
<div class="ab" style="left:641px;top:444px;width:13px;height:13px;border:1px solid #333;background:#fff"></div>
<div class="ab" style="left:710px;top:444px;width:13px;height:13px;border:1px solid #333;background:#fff"></div>
<div class="ab" style="left:779px;top:444px;width:13px;height:13px;border:1px solid #333;background:#fff"><svg style="position:absolute;left:1px;top:1px" width="11" height="11"><path d="M1.5 5.5L4.5 9L10 2" stroke="#4a4a4a" stroke-width="1.5" fill="none"/></svg></div>
<div class="t" style="left:837px;width:60px;text-align:right;top:442px;font-size:11px;color:#000">3</div>
<div class="t" style="left:918px;width:60px;text-align:right;top:442px;font-size:11px;color:#000">0</div>
<div class="t" style="left:999px;width:60px;text-align:right;top:442px;font-size:11px;color:#000">3,00</div>
<div class="ab" style="left:1061px;top:442px;width:33px;height:16px;overflow:hidden"><div class="t" style="left:12px;top:0;font-size:11px;color:#000">11/08/2023</div></div>
<div class="ab" style="left:316px;top:459px;width:33px;height:16px;background:#e4ebf6;border-right:1px solid #a6bedc;border-bottom:1px solid #a6bedc"></div>
<div class="t" style="left:351px;top:458px;font-size:11px;letter-spacing:-0.2px;color:#000">P23340001</div>
<div class="t" style="left:432px;top:458px;font-size:11px;letter-spacing:-0.2px;color:#000">Atelier Gen 2023S34</div>
<div class="t" style="left:561px;top:458px;font-size:11px;letter-spacing:-0.2px;color:#000">PVC</div>
<div class="ab" style="left:641px;top:460px;width:13px;height:13px;border:1px solid #333;background:#fff"></div>
<div class="ab" style="left:710px;top:460px;width:13px;height:13px;border:1px solid #333;background:#fff"></div>
<div class="ab" style="left:779px;top:460px;width:13px;height:13px;border:1px solid #333;background:#fff"><svg style="position:absolute;left:1px;top:1px" width="11" height="11"><path d="M1.5 5.5L4.5 9L10 2" stroke="#4a4a4a" stroke-width="1.5" fill="none"/></svg></div>
<div class="t" style="left:837px;width:60px;text-align:right;top:458px;font-size:11px;color:#000">3</div>
<div class="t" style="left:918px;width:60px;text-align:right;top:458px;font-size:11px;color:#000">3</div>
<div class="t" style="left:999px;width:60px;text-align:right;top:458px;font-size:11px;color:#000">0,00</div>
<div class="ab" style="left:1061px;top:458px;width:33px;height:16px;overflow:hidden"><div class="t" style="left:12px;top:0;font-size:11px;color:#000">12/08/2023</div></div>
<div class="ab" style="left:316px;top:475px;width:33px;height:16px;background:#e4ebf6;border-right:1px solid #a6bedc;border-bottom:1px solid #a6bedc"></div>
<div class="t" style="left:351px;top:474px;font-size:11px;letter-spacing:-0.2px;color:#000">P23340002</div>
<div class="t" style="left:432px;top:474px;font-size:11px;letter-spacing:-0.2px;color:#000">Atelier Gen 2023S34</div>
<div class="t" style="left:561px;top:474px;font-size:11px;letter-spacing:-0.2px;color:#000">PVC</div>
<div class="ab" style="left:641px;top:476px;width:13px;height:13px;border:1px solid #333;background:#fff"></div>
<div class="ab" style="left:710px;top:476px;width:13px;height:13px;border:1px solid #333;background:#fff"></div>
<div class="ab" style="left:779px;top:476px;width:13px;height:13px;border:1px solid #333;background:#fff"><svg style="position:absolute;left:1px;top:1px" width="11" height="11"><path d="M1.5 5.5L4.5 9L10 2" stroke="#4a4a4a" stroke-width="1.5" fill="none"/></svg></div>
<div class="t" style="left:837px;width:60px;text-align:right;top:474px;font-size:11px;color:#000">1</div>
<div class="t" style="left:918px;width:60px;text-align:right;top:474px;font-size:11px;color:#000">1</div>
<div class="t" style="left:999px;width:60px;text-align:right;top:474px;font-size:11px;color:#000">0,00</div>
<div class="ab" style="left:1061px;top:474px;width:33px;height:16px;overflow:hidden"><div class="t" style="left:12px;top:0;font-size:11px;color:#000">12/08/2023</div></div>
<div class="ab" style="left:316px;top:491px;width:33px;height:16px;background:#e4ebf6;border-right:1px solid #a6bedc;border-bottom:1px solid #a6bedc"></div>
<div class="t" style="left:351px;top:490px;font-size:11px;letter-spacing:-0.2px;color:#000">P23340003</div>
<div class="t" style="left:432px;top:490px;font-size:11px;letter-spacing:-0.2px;color:#000">Atelier Gen 2023S34</div>
<div class="t" style="left:561px;top:490px;font-size:11px;letter-spacing:-0.2px;color:#000">PVC</div>
<div class="ab" style="left:641px;top:492px;width:13px;height:13px;border:1px solid #333;background:#fff"></div>
<div class="ab" style="left:710px;top:492px;width:13px;height:13px;border:1px solid #333;background:#fff"></div>
<div class="ab" style="left:779px;top:492px;width:13px;height:13px;border:1px solid #333;background:#fff"><svg style="position:absolute;left:1px;top:1px" width="11" height="11"><path d="M1.5 5.5L4.5 9L10 2" stroke="#4a4a4a" stroke-width="1.5" fill="none"/></svg></div>
<div class="t" style="left:837px;width:60px;text-align:right;top:490px;font-size:11px;color:#000">1</div>
<div class="t" style="left:918px;width:60px;text-align:right;top:490px;font-size:11px;color:#000">1</div>
<div class="t" style="left:999px;width:60px;text-align:right;top:490px;font-size:11px;color:#000">0,00</div>
<div class="ab" style="left:1061px;top:490px;width:33px;height:16px;overflow:hidden"><div class="t" style="left:12px;top:0;font-size:11px;color:#000">12/08/2023</div></div>
<div class="ab" style="left:316px;top:507px;width:33px;height:16px;background:#e4ebf6;border-right:1px solid #a6bedc;border-bottom:1px solid #a6bedc"></div>
<div class="t" style="left:351px;top:506px;font-size:11px;letter-spacing:-0.2px;color:#000">P23340005</div>
<div class="t" style="left:432px;top:506px;font-size:11px;letter-spacing:-0.2px;color:#000">Atelier Gen 2023S34</div>
<div class="t" style="left:561px;top:506px;font-size:11px;letter-spacing:-0.2px;color:#000">PVC</div>
<div class="ab" style="left:641px;top:508px;width:13px;height:13px;border:1px solid #333;background:#fff"></div>
<div class="ab" style="left:710px;top:508px;width:13px;height:13px;border:1px solid #333;background:#fff"></div>
<div class="ab" style="left:779px;top:508px;width:13px;height:13px;border:1px solid #333;background:#fff"><svg style="position:absolute;left:1px;top:1px" width="11" height="11"><path d="M1.5 5.5L4.5 9L10 2" stroke="#4a4a4a" stroke-width="1.5" fill="none"/></svg></div>
<div class="t" style="left:837px;width:60px;text-align:right;top:506px;font-size:11px;color:#000">5</div>
<div class="t" style="left:918px;width:60px;text-align:right;top:506px;font-size:11px;color:#000">5</div>
<div class="t" style="left:999px;width:60px;text-align:right;top:506px;font-size:11px;color:#000">0,00</div>
<div class="ab" style="left:1061px;top:506px;width:33px;height:16px;overflow:hidden"><div class="t" style="left:12px;top:0;font-size:11px;color:#000">13/08/2023</div></div>
<div class="ab" style="left:316px;top:523px;width:33px;height:16px;background:#e4ebf6;border-right:1px solid #a6bedc;border-bottom:1px solid #a6bedc"></div>
<div class="t" style="left:351px;top:522px;font-size:11px;letter-spacing:-0.2px;color:#000">P23340006</div>
<div class="t" style="left:432px;top:522px;font-size:11px;letter-spacing:-0.2px;color:#000">Atelier Gen 2023S34</div>
<div class="t" style="left:561px;top:522px;font-size:11px;letter-spacing:-0.2px;color:#000">PVC</div>
<div class="ab" style="left:641px;top:524px;width:13px;height:13px;border:1px solid #333;background:#fff"></div>
<div class="ab" style="left:710px;top:524px;width:13px;height:13px;border:1px solid #333;background:#fff"></div>
<div class="ab" style="left:779px;top:524px;width:13px;height:13px;border:1px solid #333;background:#fff"><svg style="position:absolute;left:1px;top:1px" width="11" height="11"><path d="M1.5 5.5L4.5 9L10 2" stroke="#4a4a4a" stroke-width="1.5" fill="none"/></svg></div>
<div class="t" style="left:837px;width:60px;text-align:right;top:522px;font-size:11px;color:#000">4</div>
<div class="t" style="left:918px;width:60px;text-align:right;top:522px;font-size:11px;color:#000">4</div>
<div class="t" style="left:999px;width:60px;text-align:right;top:522px;font-size:11px;color:#000">0,00</div>
<div class="ab" style="left:1061px;top:522px;width:33px;height:16px;overflow:hidden"><div class="t" style="left:12px;top:0;font-size:11px;color:#000">13/08/2023</div></div>
<div class="ab" style="left:316px;top:539px;width:33px;height:16px;background:#e4ebf6;border-right:1px solid #a6bedc;border-bottom:1px solid #a6bedc"></div>
<div class="t" style="left:351px;top:538px;font-size:11px;letter-spacing:-0.2px;color:#000">P23340007</div>
<div class="t" style="left:432px;top:538px;font-size:11px;letter-spacing:-0.2px;color:#000">Atelier Gen 2023S34</div>
<div class="t" style="left:561px;top:538px;font-size:11px;letter-spacing:-0.2px;color:#000">PVC</div>
<div class="ab" style="left:641px;top:540px;width:13px;height:13px;border:1px solid #333;background:#fff"></div>
<div class="ab" style="left:710px;top:540px;width:13px;height:13px;border:1px solid #333;background:#fff"></div>
<div class="ab" style="left:779px;top:540px;width:13px;height:13px;border:1px solid #333;background:#fff"><svg style="position:absolute;left:1px;top:1px" width="11" height="11"><path d="M1.5 5.5L4.5 9L10 2" stroke="#4a4a4a" stroke-width="1.5" fill="none"/></svg></div>
<div class="t" style="left:837px;width:60px;text-align:right;top:538px;font-size:11px;color:#000">1</div>
<div class="t" style="left:918px;width:60px;text-align:right;top:538px;font-size:11px;color:#000">1</div>
<div class="t" style="left:999px;width:60px;text-align:right;top:538px;font-size:11px;color:#000">0,00</div>
<div class="ab" style="left:1061px;top:538px;width:33px;height:16px;overflow:hidden"><div class="t" style="left:12px;top:0;font-size:11px;color:#000">18/08/2023</div></div>
<div class="ab" style="left:316px;top:555px;width:33px;height:16px;background:#e4ebf6;border-right:1px solid #a6bedc;border-bottom:1px solid #a6bedc"></div>
<div class="t" style="left:351px;top:554px;font-size:11px;letter-spacing:-0.2px;color:#000">P23340008</div>
<div class="t" style="left:432px;top:554px;font-size:11px;letter-spacing:-0.2px;color:#000">Atelier Gen 2023S34</div>
<div class="t" style="left:561px;top:554px;font-size:11px;letter-spacing:-0.2px;color:#000">PVC</div>
<div class="ab" style="left:641px;top:556px;width:13px;height:13px;border:1px solid #333;background:#fff"></div>
<div class="ab" style="left:710px;top:556px;width:13px;height:13px;border:1px solid #333;background:#fff"></div>
<div class="ab" style="left:779px;top:556px;width:13px;height:13px;border:1px solid #333;background:#fff"><svg style="position:absolute;left:1px;top:1px" width="11" height="11"><path d="M1.5 5.5L4.5 9L10 2" stroke="#4a4a4a" stroke-width="1.5" fill="none"/></svg></div>
<div class="t" style="left:837px;width:60px;text-align:right;top:554px;font-size:11px;color:#000">1</div>
<div class="t" style="left:918px;width:60px;text-align:right;top:554px;font-size:11px;color:#000">1</div>
<div class="t" style="left:999px;width:60px;text-align:right;top:554px;font-size:11px;color:#000">0,00</div>
<div class="ab" style="left:1061px;top:554px;width:33px;height:16px;overflow:hidden"><div class="t" style="left:12px;top:0;font-size:11px;color:#000">18/08/2023</div></div>
<div class="ab" style="left:316px;top:571px;width:33px;height:16px;background:#e4ebf6;border-right:1px solid #a6bedc;border-bottom:1px solid #a6bedc"></div>
<div class="t" style="left:351px;top:570px;font-size:11px;letter-spacing:-0.2px;color:#000">P23340009</div>
<div class="t" style="left:432px;top:570px;font-size:11px;letter-spacing:-0.2px;color:#000">Atelier Gen 2023S34</div>
<div class="t" style="left:561px;top:570px;font-size:11px;letter-spacing:-0.2px;color:#000">PVC</div>
<div class="ab" style="left:641px;top:572px;width:13px;height:13px;border:1px solid #333;background:#fff"></div>
<div class="ab" style="left:710px;top:572px;width:13px;height:13px;border:1px solid #333;background:#fff"></div>
<div class="ab" style="left:779px;top:572px;width:13px;height:13px;border:1px solid #333;background:#fff"><svg style="position:absolute;left:1px;top:1px" width="11" height="11"><path d="M1.5 5.5L4.5 9L10 2" stroke="#4a4a4a" stroke-width="1.5" fill="none"/></svg></div>
<div class="t" style="left:837px;width:60px;text-align:right;top:570px;font-size:11px;color:#000">1</div>
<div class="t" style="left:918px;width:60px;text-align:right;top:570px;font-size:11px;color:#000">1</div>
<div class="t" style="left:999px;width:60px;text-align:right;top:570px;font-size:11px;color:#000">0,00</div>
<div class="ab" style="left:1061px;top:570px;width:33px;height:16px;overflow:hidden"><div class="t" style="left:12px;top:0;font-size:11px;color:#000">18/08/2023</div></div>
<div class="ab" style="left:316px;top:587px;width:33px;height:16px;background:#e4ebf6;border-right:1px solid #a6bedc;border-bottom:1px solid #a6bedc"></div>
<div class="t" style="left:351px;top:586px;font-size:11px;letter-spacing:-0.2px;color:#000">P23340010</div>
<div class="t" style="left:432px;top:586px;font-size:11px;letter-spacing:-0.2px;color:#000">Atelier Gen 2023S34</div>
<div class="t" style="left:561px;top:586px;font-size:11px;letter-spacing:-0.2px;color:#000">PVC</div>
<div class="ab" style="left:641px;top:588px;width:13px;height:13px;border:1px solid #333;background:#fff"></div>
<div class="ab" style="left:710px;top:588px;width:13px;height:13px;border:1px solid #333;background:#fff"></div>
<div class="ab" style="left:779px;top:588px;width:13px;height:13px;border:1px solid #333;background:#fff"><svg style="position:absolute;left:1px;top:1px" width="11" height="11"><path d="M1.5 5.5L4.5 9L10 2" stroke="#4a4a4a" stroke-width="1.5" fill="none"/></svg></div>
<div class="t" style="left:837px;width:60px;text-align:right;top:586px;font-size:11px;color:#000">1</div>
<div class="t" style="left:918px;width:60px;text-align:right;top:586px;font-size:11px;color:#000">1</div>
<div class="t" style="left:999px;width:60px;text-align:right;top:586px;font-size:11px;color:#000">0,00</div>
<div class="ab" style="left:1061px;top:586px;width:33px;height:16px;overflow:hidden"><div class="t" style="left:12px;top:0;font-size:11px;color:#000">18/08/2023</div></div>
<div class="ab" style="left:316px;top:603px;width:33px;height:16px;background:#fdd58c;border-right:1px solid #a6bedc;border-bottom:1px solid #a6bedc"></div>
<div class="ab" style="left:316px;top:602px;width:32px;height:1px;background:#f0a030"></div>
<div class="t" style="left:351px;top:602px;font-size:11px;letter-spacing:-0.2px;color:#000">P23360001</div>
<div class="t" style="left:432px;top:602px;font-size:11px;letter-spacing:-0.2px;color:#000">Atelier U1 2023S36</div>
<div class="t" style="left:561px;top:602px;font-size:11px;letter-spacing:-0.2px;color:#000">PVC</div>
<div class="ab" style="left:641px;top:604px;width:13px;height:13px;border:1px solid #333;background:#fff"></div>
<div class="ab" style="left:710px;top:604px;width:13px;height:13px;border:1px solid #333;background:#fff"></div>
<div class="ab" style="left:779px;top:604px;width:13px;height:13px;border:1px solid #333;background:#fff"><svg style="position:absolute;left:1px;top:1px" width="11" height="11"><path d="M1.5 5.5L4.5 9L10 2" stroke="#4a4a4a" stroke-width="1.5" fill="none"/></svg></div>
<div class="t" style="left:837px;width:60px;text-align:right;top:602px;font-size:11px;color:#000">3</div>
<div class="t" style="left:918px;width:60px;text-align:right;top:602px;font-size:11px;color:#000">3</div>
<div class="t" style="left:999px;width:60px;text-align:right;top:602px;font-size:11px;color:#000">0,00</div>
<div class="ab" style="left:1061px;top:602px;width:33px;height:16px;overflow:hidden"><div class="t" style="left:12px;top:0;font-size:11px;color:#000">01/08/2023</div></div>
<div class="ab" style="left:349px;top:601px;width:80px;height:18px;border-top:2px solid #000;border-bottom:2px solid #000;border-left:1px solid #000"></div>
<div class="ab" style="left:316px;top:619px;width:33px;height:16px;background:#e4ebf6;border-right:1px solid #a6bedc;border-bottom:1px solid #a6bedc"></div>
<div class="t" style="left:351px;top:618px;font-size:11px;letter-spacing:-0.2px;color:#000">P23370001</div>
<div class="t" style="left:432px;top:618px;font-size:11px;letter-spacing:-0.2px;color:#000">Atelier Gen 2023S37</div>
<div class="t" style="left:561px;top:618px;font-size:11px;letter-spacing:-0.2px;color:#000">PVC</div>
<div class="ab" style="left:641px;top:620px;width:13px;height:13px;border:1px solid #333;background:#fff"></div>
<div class="ab" style="left:710px;top:620px;width:13px;height:13px;border:1px solid #333;background:#fff"></div>
<div class="ab" style="left:779px;top:620px;width:13px;height:13px;border:1px solid #333;background:#fff"><svg style="position:absolute;left:1px;top:1px" width="11" height="11"><path d="M1.5 5.5L4.5 9L10 2" stroke="#4a4a4a" stroke-width="1.5" fill="none"/></svg></div>
<div class="t" style="left:837px;width:60px;text-align:right;top:618px;font-size:11px;color:#000">4</div>
<div class="t" style="left:918px;width:60px;text-align:right;top:618px;font-size:11px;color:#000">1</div>
<div class="t" style="left:999px;width:60px;text-align:right;top:618px;font-size:11px;color:#000">3,00</div>
<div class="ab" style="left:1061px;top:618px;width:33px;height:16px;overflow:hidden"><div class="t" style="left:12px;top:0;font-size:11px;color:#000">07/08/2023</div></div>
<div class="ab" style="left:316px;top:635px;width:33px;height:16px;background:#e4ebf6;border-right:1px solid #a6bedc;border-bottom:1px solid #a6bedc"></div>
<div class="t" style="left:351px;top:634px;font-size:11px;letter-spacing:-0.2px;color:#000">P23380001</div>
<div class="t" style="left:432px;top:634px;font-size:11px;letter-spacing:-0.2px;color:#000">Atelier Gen 2023S38</div>
<div class="t" style="left:561px;top:634px;font-size:11px;letter-spacing:-0.2px;color:#000">PVC</div>
<div class="ab" style="left:641px;top:636px;width:13px;height:13px;border:1px solid #333;background:#fff"></div>
<div class="ab" style="left:710px;top:636px;width:13px;height:13px;border:1px solid #333;background:#fff"></div>
<div class="ab" style="left:779px;top:636px;width:13px;height:13px;border:1px solid #333;background:#fff"><svg style="position:absolute;left:1px;top:1px" width="11" height="11"><path d="M1.5 5.5L4.5 9L10 2" stroke="#4a4a4a" stroke-width="1.5" fill="none"/></svg></div>
<div class="t" style="left:837px;width:60px;text-align:right;top:634px;font-size:11px;color:#000">3</div>
<div class="t" style="left:918px;width:60px;text-align:right;top:634px;font-size:11px;color:#000">3</div>
<div class="t" style="left:999px;width:60px;text-align:right;top:634px;font-size:11px;color:#000">0,00</div>
<div class="ab" style="left:1061px;top:634px;width:33px;height:16px;overflow:hidden"><div class="t" style="left:12px;top:0;font-size:11px;color:#000">16/08/2023</div></div>
<div class="ab" style="left:316px;top:651px;width:33px;height:16px;background:#e4ebf6;border-right:1px solid #a6bedc;border-bottom:1px solid #a6bedc"></div>
<div class="t" style="left:351px;top:650px;font-size:11px;letter-spacing:-0.2px;color:#000">P23380002</div>
<div class="t" style="left:432px;top:650px;font-size:11px;letter-spacing:-0.2px;color:#000">Atelier Gen 2023S38</div>
<div class="t" style="left:561px;top:650px;font-size:11px;letter-spacing:-0.2px;color:#000">PVC</div>
<div class="ab" style="left:641px;top:652px;width:13px;height:13px;border:1px solid #333;background:#fff"></div>
<div class="ab" style="left:710px;top:652px;width:13px;height:13px;border:1px solid #333;background:#fff"></div>
<div class="ab" style="left:779px;top:652px;width:13px;height:13px;border:1px solid #333;background:#fff"><svg style="position:absolute;left:1px;top:1px" width="11" height="11"><path d="M1.5 5.5L4.5 9L10 2" stroke="#4a4a4a" stroke-width="1.5" fill="none"/></svg></div>
<div class="t" style="left:837px;width:60px;text-align:right;top:650px;font-size:11px;color:#000">4</div>
<div class="t" style="left:918px;width:60px;text-align:right;top:650px;font-size:11px;color:#000">4</div>
<div class="t" style="left:999px;width:60px;text-align:right;top:650px;font-size:11px;color:#000">0,00</div>
<div class="ab" style="left:1061px;top:650px;width:33px;height:16px;overflow:hidden"><div class="t" style="left:12px;top:0;font-size:11px;color:#000">18/08/2023</div></div>
<div class="ab" style="left:316px;top:667px;width:33px;height:16px;background:#e4ebf6;border-right:1px solid #a6bedc;border-bottom:1px solid #a6bedc"></div>
<div class="t" style="left:351px;top:666px;font-size:11px;letter-spacing:-0.2px;color:#000">P23380003</div>
<div class="t" style="left:432px;top:666px;font-size:11px;letter-spacing:-0.2px;color:#000">Atelier Gen 2023S38</div>
<div class="t" style="left:561px;top:666px;font-size:11px;letter-spacing:-0.2px;color:#000">PVC</div>
<div class="ab" style="left:641px;top:668px;width:13px;height:13px;border:1px solid #333;background:#fff"></div>
<div class="ab" style="left:710px;top:668px;width:13px;height:13px;border:1px solid #333;background:#fff"><svg style="position:absolute;left:1px;top:1px" width="11" height="11"><path d="M1.5 5.5L4.5 9L10 2" stroke="#4a4a4a" stroke-width="1.5" fill="none"/></svg></div>
<div class="ab" style="left:779px;top:668px;width:13px;height:13px;border:1px solid #333;background:#fff"></div>
<div class="t" style="left:837px;width:60px;text-align:right;top:666px;font-size:11px;color:#000">4</div>
<div class="t" style="left:918px;width:60px;text-align:right;top:666px;font-size:11px;color:#000">1</div>
<div class="t" style="left:999px;width:60px;text-align:right;top:666px;font-size:11px;color:#000">3,00</div>
<div class="ab" style="left:1061px;top:666px;width:33px;height:16px;overflow:hidden"><div class="t" style="left:12px;top:0;font-size:11px;color:#000">18/08/2023</div></div>
<div class="ab" style="left:316px;top:683px;width:33px;height:16px;background:#e4ebf6;border-right:1px solid #a6bedc;border-bottom:1px solid #a6bedc"></div>
<div class="t" style="left:351px;top:682px;font-size:11px;letter-spacing:-0.2px;color:#000">P23390001</div>
<div class="t" style="left:432px;top:682px;font-size:11px;letter-spacing:-0.2px;color:#000">Atelier Gen 2023S39</div>
<div class="t" style="left:561px;top:682px;font-size:11px;letter-spacing:-0.2px;color:#000">PVC</div>
<div class="ab" style="left:641px;top:684px;width:13px;height:13px;border:1px solid #333;background:#fff"></div>
<div class="ab" style="left:710px;top:684px;width:13px;height:13px;border:1px solid #333;background:#fff"></div>
<div class="ab" style="left:779px;top:684px;width:13px;height:13px;border:1px solid #333;background:#fff"><svg style="position:absolute;left:1px;top:1px" width="11" height="11"><path d="M1.5 5.5L4.5 9L10 2" stroke="#4a4a4a" stroke-width="1.5" fill="none"/></svg></div>
<div class="t" style="left:837px;width:60px;text-align:right;top:682px;font-size:11px;color:#000">2</div>
<div class="t" style="left:918px;width:60px;text-align:right;top:682px;font-size:11px;color:#000">2</div>
<div class="t" style="left:999px;width:60px;text-align:right;top:682px;font-size:11px;color:#000">0,00</div>
<div class="ab" style="left:1061px;top:682px;width:33px;height:16px;overflow:hidden"><div class="t" style="left:12px;top:0;font-size:11px;color:#000">10/08/2023</div></div>
<div class="ab" style="left:316px;top:699px;width:33px;height:16px;background:#e4ebf6;border-right:1px solid #a6bedc;border-bottom:1px solid #a6bedc"></div>
<div class="t" style="left:351px;top:698px;font-size:11px;letter-spacing:-0.2px;color:#000">P23390002</div>
<div class="t" style="left:432px;top:698px;font-size:11px;letter-spacing:-0.2px;color:#000">Atelier Gen 2023S39</div>
<div class="t" style="left:561px;top:698px;font-size:11px;letter-spacing:-0.2px;color:#000">PVC</div>
<div class="ab" style="left:641px;top:700px;width:13px;height:13px;border:1px solid #333;background:#fff"></div>
<div class="ab" style="left:710px;top:700px;width:13px;height:13px;border:1px solid #333;background:#fff"></div>
<div class="ab" style="left:779px;top:700px;width:13px;height:13px;border:1px solid #333;background:#fff"></div>
<div class="t" style="left:837px;width:60px;text-align:right;top:698px;font-size:11px;color:#000">1</div>
<div class="t" style="left:918px;width:60px;text-align:right;top:698px;font-size:11px;color:#000">0</div>
<div class="t" style="left:999px;width:60px;text-align:right;top:698px;font-size:11px;color:#000">1,00</div>
<div class="ab" style="left:1061px;top:698px;width:33px;height:16px;overflow:hidden"><div class="t" style="left:12px;top:0;font-size:11px;color:#000">11/08/2023</div></div>
<div class="ab" style="left:316px;top:715px;width:33px;height:16px;background:#e4ebf6;border-right:1px solid #a6bedc;border-bottom:1px solid #a6bedc"></div>
<div class="t" style="left:351px;top:714px;font-size:11px;letter-spacing:-0.2px;color:#000">P23390003</div>
<div class="t" style="left:432px;top:714px;font-size:11px;letter-spacing:-0.2px;color:#000">Atelier Gen 2023S39</div>
<div class="t" style="left:561px;top:714px;font-size:11px;letter-spacing:-0.2px;color:#000">PVC</div>
<div class="ab" style="left:641px;top:716px;width:13px;height:13px;border:1px solid #333;background:#fff"></div>
<div class="ab" style="left:710px;top:716px;width:13px;height:13px;border:1px solid #333;background:#fff"></div>
<div class="ab" style="left:779px;top:716px;width:13px;height:13px;border:1px solid #333;background:#fff"></div>
<div class="t" style="left:837px;width:60px;text-align:right;top:714px;font-size:11px;color:#000">1</div>
<div class="t" style="left:918px;width:60px;text-align:right;top:714px;font-size:11px;color:#000">0</div>
<div class="t" style="left:999px;width:60px;text-align:right;top:714px;font-size:11px;color:#000">1,00</div>
<div class="ab" style="left:1061px;top:714px;width:33px;height:16px;overflow:hidden"><div class="t" style="left:12px;top:0;font-size:11px;color:#000">11/08/2023</div></div>
<div class="ab" style="left:316px;top:731px;width:33px;height:16px;background:#e4ebf6;border-right:1px solid #a6bedc;border-bottom:1px solid #a6bedc"></div>
<div class="t" style="left:351px;top:730px;font-size:11px;letter-spacing:-0.2px;color:#000">T2335</div>
<div class="t" style="left:432px;top:730px;font-size:11px;letter-spacing:-0.2px;color:#000">Atelier Gen 2023S35</div>
<div class="t" style="left:561px;top:730px;font-size:11px;letter-spacing:-0.2px;color:#000">PVC</div>
<div class="ab" style="left:641px;top:732px;width:13px;height:13px;border:1px solid #333;background:#fff"></div>
<div class="ab" style="left:710px;top:732px;width:13px;height:13px;border:1px solid #333;background:#fff"></div>
<div class="ab" style="left:779px;top:732px;width:13px;height:13px;border:1px solid #333;background:#fff"></div>
<div class="t" style="left:837px;width:60px;text-align:right;top:730px;font-size:11px;color:#000">5</div>
<div class="t" style="left:918px;width:60px;text-align:right;top:730px;font-size:11px;color:#000">0</div>
<div class="t" style="left:999px;width:60px;text-align:right;top:730px;font-size:11px;color:#000">5,00</div>
<div class="ab" style="left:1061px;top:730px;width:33px;height:16px;overflow:hidden"><div class="t" style="left:12px;top:0;font-size:11px;color:#000">14/08/2023</div></div>
<div class="ab" style="left:429px;top:235px;width:1px;height:511px;border-left:1px dotted #c4c4c4"></div>
<div class="ab" style="left:558px;top:235px;width:1px;height:511px;border-left:1px dotted #c4c4c4"></div>
<div class="ab" style="left:615px;top:235px;width:1px;height:511px;border-left:1px dotted #c4c4c4"></div>
<div class="ab" style="left:680px;top:235px;width:1px;height:511px;border-left:1px dotted #c4c4c4"></div>
<div class="ab" style="left:753px;top:235px;width:1px;height:511px;border-left:1px dotted #c4c4c4"></div>
<div class="ab" style="left:818px;top:235px;width:1px;height:511px;border-left:1px dotted #c4c4c4"></div>
<div class="ab" style="left:899px;top:235px;width:1px;height:511px;border-left:1px dotted #c4c4c4"></div>
<div class="ab" style="left:980px;top:235px;width:1px;height:511px;border-left:1px dotted #c4c4c4"></div>
<div class="ab" style="left:1061px;top:235px;width:1px;height:511px;border-left:1px dotted #c4c4c4"></div>
<div class="ab" style="left:1094px;top:235px;width:1px;height:511px;border-left:1px dotted #c4c4c4"></div>
<div class="ab" style="left:349px;top:746px;width:745px;height:1px;background:#a0a0a0"></div>
<div class="ab" style="left:1094px;top:204px;width:16px;height:803px;background:#7198c4"></div>
<div class="ab" style="left:1094px;top:842px;width:16px;height:149px;background:linear-gradient(90deg,#dce8f8,#c5d8f2);border:1px solid #6a8cb8"></div>
<div class="ab" style="left:1094px;top:204px;width:16px;height:16px;background:linear-gradient(90deg,#e3edf9 50%,#c9dbf3 50%);border:1px solid #5a6f96"></div>
<svg class="ab" style="left:1097px;top:209px" width="10" height="6"><path d="M0 5.5H10L5 0Z" fill="#3b4868"/></svg>
<div class="ab" style="left:1094px;top:991px;width:16px;height:16px;background:linear-gradient(90deg,#e3edf9 50%,#c9dbf3 50%);border:1px solid #5a6f96"></div>
<svg class="ab" style="left:1097px;top:997px" width="10" height="6"><path d="M0 0H10L5 5.5Z" fill="#3b4868"/></svg>
<div class="ab" style="left:316px;top:1007px;width:778px;height:16px;background:#7198c4"></div>
<div class="ab" style="left:316px;top:1007px;width:685px;height:16px;background:linear-gradient(#dce8f8,#c5d8f2);border:1px solid #6a8cb8"></div>
<div class="ab" style="left:316px;top:1007px;width:16px;height:16px;background:linear-gradient(#e3edf9 50%,#c9dbf3 50%);border:1px solid #5a6f96"></div>
<svg class="ab" style="left:320px;top:1010px" width="6" height="10"><path d="M5.5 0V10L0 5Z" fill="#3b4868"/></svg>
<div class="ab" style="left:1078px;top:1007px;width:16px;height:16px;background:linear-gradient(#e3edf9 50%,#c9dbf3 50%);border:1px solid #5a6f96"></div>
<svg class="ab" style="left:1084px;top:1011px" width="6" height="10"><path d="M0 0V10L5.5 5Z" fill="#3b4868"/></svg>
<div class="ab" style="left:1094px;top:1007px;width:16px;height:16px;background:linear-gradient(#7fa2d2,#9db7de)"></div>
<div class="ab" style="left:318px;top:1031px;width:66px;height:20px;background:#e1e1e1;border:1px solid #adadad"></div>
<svg class="ab" style="left:327px;top:1035px" width="12" height="12"><path d="M1.5 1.5L10.5 10.5M10.5 1.5L1.5 10.5" stroke="#e8501e" stroke-width="2.6"/></svg>
<div class="t" style="left:344px;top:1033px;font-size:11px;letter-spacing:-0.3px;color:#000">Fermer</div>
<div class="ab" style="left:1117px;top:198px;width:793px;height:28px;background:linear-gradient(#f0f0f0,#f8f8f8)"></div>
<div class="ab" style="left:1117px;top:225px;width:793px;height:799px;border-left:1px solid #a0a0a0;border-top:1px solid #a0a0a0;border-bottom:1px solid #a0a0a0;background:#f0f0f0"></div>
<div class="ab" style="left:1122px;top:227px;width:788px;height:791px;background:#fff"></div>
<svg class="ab" style="left:1117px;top:205px" width="200" height="23"><path d="M103.6 7.5L107.5 2.5Q108.5 1 110.5 1H169.5Q171.5 1 173 3L181.7 20.6" fill="#f6f6f6" stroke="#8c8c8c" stroke-width="1"/><path d="M5.7 20.6L13 6Q15 1 19 1H96.5Q99 1 101 4L109 20.6" fill="#f6f6f6" stroke="#8c8c8c" stroke-width="1"/><rect x="6.5" y="20" width="102" height="3" fill="#f0f0f0"/></svg>
<svg class="ab" style="left:1135px;top:208px" width="14" height="16"><path d="M5 1H11L13 3V13H5Z" fill="#efe6d6" stroke="#b8ad9a" stroke-width="0.8"/><path d="M1 5H8L10 7V15H1Z" fill="#f5eee2" stroke="#b8ad9a" stroke-width="0.8"/></svg>
<div class="t" style="left:1151px;top:208px;font-size:12px;font-weight:bold;color:#000">Généralités</div>
<div class="t" style="left:1225px;top:208px;font-size:11px;color:#000">Qui, quand ?</div>
<div class="ab" style="left:1123px;top:230px;width:550px;height:25px;background:#00a6b4"></div>
<div class="t" style="left:1155px;top:236px;font-size:11px;font-weight:bold;color:#fff;line-height:17px">GENERALITES</div>
<div class="ab" style="left:1123px;top:341px;width:550px;height:25px;background:#00a6b4"></div>
<div class="t" style="left:1155px;top:347px;font-size:11px;font-weight:bold;color:#fff;line-height:17px">PLANIFICATION ET SUIVI</div>
<div class="ab" style="left:1123px;top:471px;width:550px;height:25px;background:#00a6b4"></div>
<div class="t" style="left:1155px;top:477px;font-size:11px;font-weight:bold;color:#fff;line-height:17px">STATUT</div>
<div class="ab" style="left:1123px;top:561px;width:550px;height:25px;background:#00a6b4"></div>
<div class="t" style="left:1155px;top:567px;font-size:11px;font-weight:bold;color:#fff;line-height:17px">SUIVI</div>
<div class="t" style="left:1024px;width:200px;text-align:right;top:262px;font-size:11px;color:#000">Série</div>
<div class="ab" style="left:1232px;top:261px;width:200px;height:20px;background:#e9edf8"></div>
<div class="t" style="left:1235px;top:262.5px;font-size:12px;font-weight:bold;letter-spacing:0.15px;color:#000">P23360001</div>
<div class="t" style="left:1024px;width:200px;text-align:right;top:287px;font-size:11px;color:#000">Libellé série</div>
<div class="ab" style="left:1232px;top:286px;width:200px;height:20px;background:#e9edf8"></div>
<div class="t" style="left:1235px;top:287.5px;font-size:12px;font-weight:bold;letter-spacing:0.15px;color:#000">Atelier U1 2023S36</div>
<div class="t" style="left:1354px;width:200px;text-align:right;top:287px;font-size:11px;color:#000">Unité Production</div>
<div class="ab" style="left:1562px;top:286px;width:90px;height:17px;background:#e9edf8"></div>
<div class="t" style="left:1565px;top:287.5px;font-size:12px;font-weight:bold;letter-spacing:0.15px;color:#000">U1</div>
<div class="ab" style="left:1655px;top:287px;width:14px;height:14px;background:#fff;border:1px solid #b8b8b8;box-shadow:inset 0 0 0 1px #d4d4d4;font-size:11px;font-weight:bold;line-height:12px;text-align:center;color:#000">?</div>
<div class="t" style="left:1024px;width:200px;text-align:right;top:312px;font-size:11px;color:#000">Gestionnaire</div>
<div class="ab" style="left:1232px;top:311px;width:200px;height:20px;background:#e9edf8"></div>
<div class="t" style="left:1235px;top:312.5px;font-size:12px;font-weight:bold;letter-spacing:0.15px;color:#000">U1</div>
<div class="ab" style="left:1435px;top:312px;width:14px;height:14px;background:#fff;border:1px solid #b8b8b8;box-shadow:inset 0 0 0 1px #d4d4d4;font-size:11px;font-weight:bold;line-height:12px;text-align:center;color:#000">?</div>
<div class="t" style="left:1455px;top:312px;font-size:11px;color:#000">Site de production 1</div>
<div class="t" style="left:1024px;width:200px;text-align:right;top:372px;font-size:11px;color:#000">Date prévue début</div>
<div class="ab" style="left:1232px;top:371px;width:200px;height:20px;background:#e9edf8"></div>
<div class="t" style="left:1235px;top:372.5px;font-size:12px;font-weight:bold;letter-spacing:0.8px;color:#000">28/08/2023</div>
<div class="ab" style="left:1435px;top:372px;width:14px;height:14px;background:#fff;border:1px solid #b8b8b8;box-shadow:inset 0 0 0 1px #d4d4d4;font-size:11px;font-weight:bold;line-height:12px;text-align:center;color:#000">?</div>
<div class="t" style="left:1024px;width:200px;text-align:right;top:397px;font-size:11px;color:#000">Date prévue fin</div>
<div class="ab" style="left:1232px;top:396px;width:200px;height:20px;background:#e9edf8"></div>
<div class="t" style="left:1235px;top:397.5px;font-size:12px;font-weight:bold;letter-spacing:0.8px;color:#000">06/09/2023</div>
<div class="ab" style="left:1435px;top:397px;width:14px;height:14px;background:#fff;border:1px solid #b8b8b8;box-shadow:inset 0 0 0 1px #d4d4d4;font-size:11px;font-weight:bold;line-height:12px;text-align:center;color:#000">?</div>
<div class="t" style="left:1024px;width:200px;text-align:right;top:422px;font-size:11px;color:#000">Date réelle debut</div>
<div class="ab" style="left:1232px;top:421px;width:200px;height:20px;background:#e9edf8"></div>
<div class="t" style="left:1235px;top:422.5px;font-size:12px;font-weight:bold;letter-spacing:0.8px;color:#000">01/08/2023</div>
<div class="ab" style="left:1435px;top:422px;width:14px;height:14px;background:#fff;border:1px solid #b8b8b8;box-shadow:inset 0 0 0 1px #d4d4d4;font-size:11px;font-weight:bold;line-height:12px;text-align:center;color:#000">?</div>
<div class="t" style="left:1024px;width:200px;text-align:right;top:447px;font-size:11px;color:#000">Date réelle fin</div>
<div class="ab" style="left:1232px;top:446px;width:200px;height:20px;background:#e9edf8"></div>
<div class="t" style="left:1235px;top:447.5px;font-size:12px;font-weight:bold;letter-spacing:0.8px;color:#000">01/08/2023</div>
<div class="ab" style="left:1435px;top:447px;width:14px;height:14px;background:#fff;border:1px solid #b8b8b8;box-shadow:inset 0 0 0 1px #d4d4d4;font-size:11px;font-weight:bold;line-height:12px;text-align:center;color:#000">?</div>
<div class="t" style="left:1027px;width:200px;text-align:right;top:501px;font-size:11px;letter-spacing:-0.35px;color:#000">Fabriqué partiellement</div>
<div class="ab" style="left:1232px;top:503px;width:10px;height:13px;background:#e9edf8"></div>
<div class="ab" style="left:1232px;top:504px;width:10px;height:10px;border:1px solid #b8b8b8;background:#fff"></div>
<div class="t" style="left:1024px;width:200px;text-align:right;top:521px;font-size:11px;color:#000">Fabriquée</div>
<div class="ab" style="left:1232px;top:523px;width:10px;height:13px;background:#e9edf8"></div>
<div class="ab" style="left:1232px;top:524px;width:10px;height:10px;border:1px solid #b8b8b8;background:#fff"></div>
<svg class="ab" style="left:1233px;top:525px" width="8" height="8"><path d="M1 4L3 6.5L7 1.5" stroke="#b0b0b0" stroke-width="1" fill="none"/></svg>
<div class="t" style="left:1024px;width:200px;text-align:right;top:541px;font-size:11px;color:#000">Lancement atelier</div>
<div class="ab" style="left:1232px;top:543px;width:10px;height:13px;background:#e9edf8"></div>
<div class="ab" style="left:1232px;top:544px;width:10px;height:10px;border:1px solid #b8b8b8;background:#fff"></div>
<div class="t" style="left:1024px;width:200px;text-align:right;top:592px;font-size:11px;color:#000">Quantité lancée</div>
<div class="ab" style="left:1232px;top:591px;width:100px;height:20px;background:#e9edf8"></div>
<div class="t" style="left:1255px;top:592.5px;font-size:12px;font-weight:bold;letter-spacing:0.5px;color:#000">3,00</div>
<div class="t" style="left:1024px;width:200px;text-align:right;top:617px;font-size:11px;color:#000">Quantité fabriquée</div>
<div class="ab" style="left:1232px;top:616px;width:100px;height:20px;background:#e9edf8"></div>
<div class="t" style="left:1255px;top:617.5px;font-size:12px;font-weight:bold;letter-spacing:0.5px;color:#000">3,00</div>
<div class="t" style="left:1024px;width:200px;text-align:right;top:642px;font-size:11px;color:#000">Quantité restante</div>
<div class="ab" style="left:1232px;top:641px;width:100px;height:20px;background:#e9edf8"></div>
<div class="t" style="left:1255px;top:642.5px;font-size:12px;font-weight:bold;letter-spacing:0.5px;color:#000">0,00</div>
<div class="ab" style="left:1120px;top:1031px;width:80px;height:20px;background:#cbcbcb;border:1px solid #bdbdbd"></div>
<svg class="ab" style="left:1129px;top:1036px" width="12" height="10"><path d="M1 5L4.5 8.5L11 1.5" stroke="#b0b0b0" stroke-width="2.2" fill="none"/></svg>
<div class="t" style="left:1146px;top:1033px;font-size:11px;color:#606060">Validation</div>
<div class="ab" style="left:1204px;top:1031px;width:80px;height:20px;background:#cbcbcb;border:1px solid #bdbdbd"></div>
<div class="t" style="left:1215px;top:1033px;font-size:11px;color:#606060">Sauvegarde</div>
<div class="ab" style="left:1288px;top:1031px;width:80px;height:20px;background:#cbcbcb;border:1px solid #bdbdbd"></div>
<svg class="ab" style="left:1299px;top:1035px" width="12" height="12"><path d="M1.5 1.5L10.5 10.5M10.5 1.5L1.5 10.5" stroke="#a8a8a8" stroke-width="2.2"/></svg>
<div class="t" style="left:1316px;top:1033px;font-size:11px;color:#606060">Abandon</div>
<div class="ab" style="left:312px;top:594px;width:2px;height:2px;background:#3b6fd8"></div>
<div class="ab" style="left:312px;top:598px;width:2px;height:2px;background:#3b6fd8"></div>
<div class="ab" style="left:312px;top:602px;width:2px;height:2px;background:#3b6fd8"></div>
<div class="ab" style="left:312px;top:606px;width:2px;height:2px;background:#3b6fd8"></div>
<div class="ab" style="left:312px;top:610px;width:2px;height:2px;background:#3b6fd8"></div>
<div class="ab" style="left:655px;top:292px;width:4px;height:770px;background:linear-gradient(90deg,rgba(0,0,0,0.5),rgba(0,0,0,0.22) 40%,rgba(0,0,0,0))"></div>
<div class="ab" style="left:402px;top:286px;width:253px;height:772px;background:#f0f0f0;border:1px solid #b4b4b4;border-right-color:#9a9a9a;box-shadow:inset 1px 1px 0 #faf6f2"></div>
<div class="ab" style="left:405px;top:289px;width:247px;height:22px;background:#8f98f3;border-top:2px solid #86c4f4"></div>
<div class="t" style="left:437px;top:292px;font-size:12px;color:#000">Gestion Lignes (Maj+F3)</div>
<div class="ab" style="left:433px;top:314px;width:219px;height:1px;background:#d7d7d7"></div>
<div class="t" style="left:437px;top:321px;font-size:12px;color:#000">Création (F9)</div>
<div class="t" style="left:437px;top:343px;font-size:12px;color:#000">Modification (F1)</div>
<div class="t" style="left:437px;top:365px;font-size:12px;color:#6d6d6d">Suppression (F6)</div>
<div class="t" style="left:437px;top:387px;font-size:12px;color:#000">Détail (F8)</div>
<div class="t" style="left:437px;top:409px;font-size:12px;color:#000">Consultation Inf. Techniques</div>
<div class="t" style="left:437px;top:431px;font-size:12px;color:#6d6d6d">Historique (F10)</div>
<div class="t" style="left:437px;top:453px;font-size:12px;color:#6d6d6d">Eléments Récents (Maj+F8)</div>
<div class="t" style="left:437px;top:475px;font-size:12px;color:#000">Historique Messages / Entité</div>
<div class="t" style="left:437px;top:497px;font-size:12px;color:#6d6d6d">Envoyer un message</div>
<div class="ab" style="left:433px;top:519px;width:219px;height:1px;background:#d7d7d7"></div>
<div class="t" style="left:437px;top:526px;font-size:12px;color:#000">Nouvelle Tâche</div>
<div class="t" style="left:437px;top:548px;font-size:12px;color:#6d6d6d">Tâches de l'Entité</div>
<div class="ab" style="left:433px;top:570px;width:219px;height:1px;background:#d7d7d7"></div>
<div class="t" style="left:437px;top:577px;font-size:12px;color:#000">Joindre un document</div>
<div class="t" style="left:437px;top:599px;font-size:12px;color:#000">Documents GED</div>
<div class="ab" style="left:433px;top:621px;width:219px;height:1px;background:#d7d7d7"></div>
<div class="t" style="left:437px;top:628px;font-size:12px;color:#000">Accès à</div>
<svg class="ab" style="left:637px;top:632px" width="6" height="9"><path d="M1 1L4.5 4.5L1 8" stroke="#333" stroke-width="1.1" fill="none"/></svg>
<div class="ab" style="left:433px;top:650px;width:219px;height:1px;background:#d7d7d7"></div>
<div class="t" style="left:437px;top:657px;font-size:12px;color:#000">Lancement Atelier</div>
<svg class="ab" style="left:637px;top:661px" width="6" height="9"><path d="M1 1L4.5 4.5L1 8" stroke="#333" stroke-width="1.1" fill="none"/></svg>
<div class="ab" style="left:433px;top:679px;width:219px;height:1px;background:#d7d7d7"></div>
<div class="t" style="left:437px;top:686px;font-size:12px;color:#000">Déclaration de Fabrication</div>
<svg class="ab" style="left:637px;top:690px" width="6" height="9"><path d="M1 1L4.5 4.5L1 8" stroke="#333" stroke-width="1.1" fill="none"/></svg>
<div class="t" style="left:437px;top:708px;font-size:12px;color:#000">His. Déclarations / Série</div>
<div class="ab" style="left:433px;top:730px;width:219px;height:1px;background:#d7d7d7"></div>
<div class="t" style="left:437px;top:737px;font-size:12px;color:#000">Informations Suivies</div>
<div class="ab" style="left:433px;top:759px;width:219px;height:1px;background:#d7d7d7"></div>
<div class="t" style="left:437px;top:766px;font-size:12px;color:#000">Déclaration Co-Produits</div>
<div class="ab" style="left:433px;top:788px;width:219px;height:1px;background:#d7d7d7"></div>
<div class="t" style="left:437px;top:795px;font-size:12px;color:#000">Composants Rattachés</div>
<div class="t" style="left:437px;top:817px;font-size:12px;color:#000">Visualisation File d'Attente</div>
<div class="t" style="left:437px;top:839px;font-size:12px;color:#000">Caract. File d'Attente</div>
<div class="ab" style="left:433px;top:861px;width:219px;height:1px;background:#d7d7d7"></div>
<div class="t" style="left:437px;top:868px;font-size:12px;color:#000">Solde Série (Maj+F6)</div>
<div class="t" style="left:437px;top:890px;font-size:12px;color:#000">Déblocage Séries</div>
<div class="t" style="left:437px;top:912px;font-size:12px;color:#000">Re-génération Séries</div>
<div class="ab" style="left:433px;top:934px;width:219px;height:1px;background:#d7d7d7"></div>
<div class="t" style="left:437px;top:941px;font-size:12px;color:#000">Ma Présentation de Démarrage</div>
<div class="t" style="left:437px;top:963px;font-size:12px;color:#000">Actualiser la Présentation</div>
<div class="t" style="left:437px;top:985px;font-size:12px;color:#000">Présentations</div>
<svg class="ab" style="left:637px;top:989px" width="6" height="9"><path d="M1 1L4.5 4.5L1 8" stroke="#333" stroke-width="1.1" fill="none"/></svg>
<div class="ab" style="left:433px;top:1007px;width:219px;height:1px;background:#d7d7d7"></div>
<div class="t" style="left:437px;top:1014px;font-size:12px;color:#000">Définition Filtres et Tris</div>
<div class="t" style="left:437px;top:1036px;font-size:12px;color:#000">Sélections Filtres et Tris</div>
<svg class="ab" style="left:637px;top:1040px" width="6" height="9"><path d="M1 1L4.5 4.5L1 8" stroke="#333" stroke-width="1.1" fill="none"/></svg>
<svg class="ab" style="left:582px;top:296px" width="26" height="36" viewBox="0 0 26 36"><path d="M4 4V26L9.5 21L14 31.5L17 30L13 20.5H20Z" fill="none" stroke="#fff" stroke-width="4.6" stroke-linejoin="round"/><path d="M4 4V26L9.5 21L14 31.5L17 30L13 20.5H20Z" fill="#fff" stroke="#000" stroke-width="2.3" stroke-linejoin="miter"/><path d="M5.5 7.5V14L9 11Z" fill="#f79cf7" opacity="0"/></svg>
</body></html>
